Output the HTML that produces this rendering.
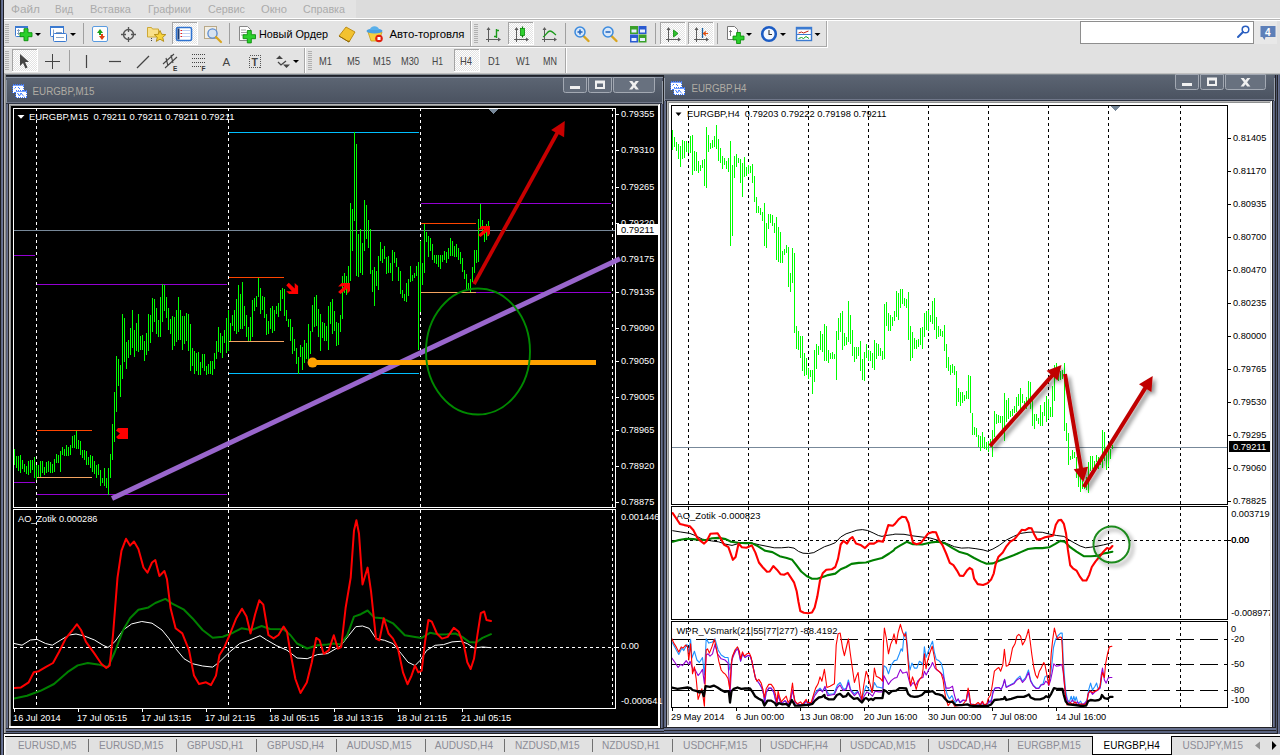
<!DOCTYPE html>
<html lang="ru"><head><meta charset="utf-8"><title>MetaTrader 4 - EURGBP</title>
<style>
html,body{margin:0;padding:0;background:#dcdcdc;}
body{width:1280px;height:755px;position:relative;overflow:hidden;font-family:"Liberation Sans",sans-serif;}
svg{display:block}
svg text{font-family:"Liberation Sans",sans-serif;}
</style></head><body>
<svg id="frame" width="1280" height="755" viewBox="0 0 1280 755" font-family="Liberation Sans, sans-serif" style="position:absolute;left:0;top:0"><defs><linearGradient id="tg" x1="0" y1="0" x2="0" y2="1"><stop offset="0" stop-color="#5c6573"/><stop offset="1" stop-color="#4b5361"/></linearGradient></defs>
<g shape-rendering="crispEdges">
<rect x="0" y="0" width="1280" height="21" fill="#dcdcdc" />
<rect x="0" y="21" width="1280" height="54" fill="#e1e1e1" />
<rect x="4" y="0" width="352" height="18" fill="#e3e3e3" />
<rect x="4" y="18" width="1276" height="1" fill="#ffffff" />
<rect x="4" y="19" width="1276" height="1" fill="#b4b4b4" />
<rect x="4" y="20" width="1276" height="1" fill="#ffffff" />
<rect x="4" y="21" width="823" height="26" fill="#e3e3e3" />
<rect x="4" y="46" width="823" height="1" fill="#a8a8a8" />
<rect x="4" y="47" width="824" height="1" fill="#ffffff" />
<rect x="826" y="21" width="1" height="26" fill="#a8a8a8" />
<rect x="827" y="21" width="1" height="27" fill="#ffffff" />
<rect x="470" y="21" width="1" height="25" fill="#a8a8a8" />
<rect x="471" y="21" width="1" height="25" fill="#ffffff" />
<rect x="4" y="48" width="562" height="25" fill="#e3e3e3" />
<rect x="565" y="48" width="1" height="25" fill="#a8a8a8" />
<rect x="566" y="48" width="1" height="25" fill="#ffffff" />
<rect x="304" y="48" width="1" height="25" fill="#a8a8a8" />
<rect x="305" y="48" width="1" height="25" fill="#ffffff" />
<rect x="4" y="73" width="1276" height="1" fill="#c0c0c0" />
<rect x="4" y="74" width="1276" height="1" fill="#80888f" />
<rect x="4" y="75" width="1276" height="659" fill="#5a6480" />
<rect x="0" y="0" width="1" height="755" fill="#1c1c1c" />
<rect x="1" y="0" width="1" height="755" fill="#5c6788" />
<rect x="2" y="0" width="1" height="755" fill="#6b7596" />
<rect x="3" y="0" width="1" height="755" fill="#202024" />
<rect x="4" y="73" width="1" height="663" fill="#b6b6b6" />
<rect x="5" y="74" width="1" height="662" fill="#8c8e8e" />
<rect x="1276" y="75" width="1" height="659" fill="#505870" />
<rect x="1277" y="75" width="1" height="661" fill="#222226" />
<rect x="1278" y="75" width="1" height="661" fill="#67718f" />
<rect x="1279" y="75" width="1" height="661" fill="#535b78" />
<rect x="6" y="75" width="658" height="657" fill="#67718f" />
<rect x="6" y="75" width="658" height="1" fill="#1e2028" />
<rect x="6" y="76" width="658" height="1" fill="#2a303a" />
<rect x="6" y="77" width="658" height="1" fill="#8a93a2" />
<rect x="6" y="78" width="657" height="24" fill="url(#tg)" />
<rect x="6" y="102" width="658" height="1" fill="#6f7688" />
<rect x="6" y="103" width="658" height="1" fill="#2e3442" />
<rect x="6" y="104" width="1" height="628" fill="#565d76" />
<rect x="7" y="104" width="1" height="628" fill="#68728f" />
<rect x="8" y="104" width="1" height="628" fill="#222226" />
<rect x="660" y="104" width="1" height="628" fill="#222226" />
<rect x="661" y="104" width="1" height="628" fill="#67718f" />
<rect x="662" y="78" width="1" height="654" fill="#4a5068" />
<rect x="663" y="75" width="1" height="657" fill="#222226" />
<rect x="6" y="728" width="658" height="1" fill="#222226" />
<rect x="6" y="729" width="658" height="1" fill="#67718f" />
<rect x="6" y="730" width="658" height="1" fill="#67718f" />
<rect x="6" y="731" width="658" height="1" fill="#222226" />
<rect x="9" y="104" width="651" height="1" fill="#b8b8b8" />
<rect x="9" y="105" width="651" height="1" fill="#8e9090" />
<rect x="9" y="104" width="1" height="624" fill="#b8b8b8" />
<rect x="10" y="105" width="1" height="623" fill="#8e9090" />
<rect x="658" y="105" width="1" height="623" fill="#ffffff" />
<rect x="659" y="104" width="1" height="624" fill="#ffffff" />
<rect x="9" y="726" width="651" height="1" fill="#ffffff" />
<rect x="9" y="727" width="651" height="1" fill="#ffffff" />
<rect x="664" y="75" width="612" height="656" fill="#67718f" />
<rect x="664" y="75" width="612" height="24" fill="url(#tg)" />
<rect x="664" y="99" width="612" height="1" fill="#6f7688" />
<rect x="664" y="100" width="612" height="1" fill="#2e3442" />
<rect x="664" y="101" width="1" height="630" fill="#5a6480" />
<rect x="665" y="101" width="1" height="630" fill="#67718f" />
<rect x="666" y="101" width="1" height="630" fill="#222226" />
<rect x="1272" y="101" width="1" height="630" fill="#222226" />
<rect x="1273" y="101" width="1" height="630" fill="#67718f" />
<rect x="1274" y="75" width="1" height="656" fill="#565d76" />
<rect x="1275" y="75" width="1" height="656" fill="#222226" />
<rect x="664" y="727" width="612" height="1" fill="#222226" />
<rect x="664" y="728" width="612" height="1" fill="#67718f" />
<rect x="664" y="729" width="612" height="1" fill="#67718f" />
<rect x="664" y="730" width="612" height="1" fill="#222226" />
<rect x="667" y="101" width="605" height="1" fill="#b8b8b8" />
<rect x="667" y="102" width="605" height="1" fill="#8e9090" />
<rect x="667" y="101" width="1" height="626" fill="#b8b8b8" />
<rect x="668" y="102" width="1" height="625" fill="#8e9090" />
<rect x="1270" y="102" width="1" height="625" fill="#e4e4e4" />
<rect x="1271" y="101" width="1" height="626" fill="#ffffff" />
<rect x="667" y="725" width="605" height="1" fill="#e4e4e4" />
<rect x="667" y="726" width="605" height="1" fill="#ffffff" />
<rect x="6" y="80" width="1" height="23" fill="#8790a0" />
<rect x="662" y="81" width="1" height="23" fill="#98a0ac" />
<rect x="664" y="78" width="1" height="23" fill="#98a0ac" />
<rect x="1274" y="78" width="1" height="23" fill="#98a0ac" />
<rect x="4" y="733" width="1273" height="1" fill="#222226" />
<rect x="4" y="734" width="1276" height="1" fill="#ffffff" />
<rect x="4" y="735" width="1276" height="1" fill="#ffffff" />
<rect x="4" y="736" width="1276" height="1" fill="#000000" />
<rect x="4" y="737" width="1276" height="18" fill="#e1e1e1" />
<rect x="4" y="734" width="1" height="21" fill="#ffffff" />
<rect x="5" y="737" width="1" height="18" fill="#f4f4f4" />
<rect x="1092" y="736" width="80" height="19" fill="#000" />
<rect x="1093" y="734" width="78" height="20" fill="#fff" />
</g>
<defs><pattern id="chk" width="2" height="2" patternUnits="userSpaceOnUse"><rect width="2" height="2" fill="#e2e2e2"/><rect width="1" height="1" fill="#fff"/><rect x="1" y="1" width="1" height="1" fill="#fff"/></pattern></defs>
<rect x="5" y="24" width="4" height="1" fill="#b0b0b0" shape-rendering="crispEdges"/>
<rect x="5" y="26" width="4" height="1" fill="#b0b0b0" shape-rendering="crispEdges"/>
<rect x="5" y="28" width="4" height="1" fill="#b0b0b0" shape-rendering="crispEdges"/>
<rect x="5" y="30" width="4" height="1" fill="#b0b0b0" shape-rendering="crispEdges"/>
<rect x="5" y="32" width="4" height="1" fill="#b0b0b0" shape-rendering="crispEdges"/>
<rect x="5" y="34" width="4" height="1" fill="#b0b0b0" shape-rendering="crispEdges"/>
<rect x="5" y="36" width="4" height="1" fill="#b0b0b0" shape-rendering="crispEdges"/>
<rect x="5" y="38" width="4" height="1" fill="#b0b0b0" shape-rendering="crispEdges"/>
<rect x="5" y="40" width="4" height="1" fill="#b0b0b0" shape-rendering="crispEdges"/>
<rect x="5" y="42" width="4" height="1" fill="#b0b0b0" shape-rendering="crispEdges"/>
<rect x="5" y="51" width="4" height="1" fill="#b0b0b0" shape-rendering="crispEdges"/>
<rect x="5" y="53" width="4" height="1" fill="#b0b0b0" shape-rendering="crispEdges"/>
<rect x="5" y="55" width="4" height="1" fill="#b0b0b0" shape-rendering="crispEdges"/>
<rect x="5" y="57" width="4" height="1" fill="#b0b0b0" shape-rendering="crispEdges"/>
<rect x="5" y="59" width="4" height="1" fill="#b0b0b0" shape-rendering="crispEdges"/>
<rect x="5" y="61" width="4" height="1" fill="#b0b0b0" shape-rendering="crispEdges"/>
<rect x="5" y="63" width="4" height="1" fill="#b0b0b0" shape-rendering="crispEdges"/>
<rect x="5" y="65" width="4" height="1" fill="#b0b0b0" shape-rendering="crispEdges"/>
<rect x="5" y="67" width="4" height="1" fill="#b0b0b0" shape-rendering="crispEdges"/>
<rect x="5" y="69" width="4" height="1" fill="#b0b0b0" shape-rendering="crispEdges"/>
<rect x="474" y="24" width="4" height="1" fill="#b0b0b0" shape-rendering="crispEdges"/>
<rect x="474" y="26" width="4" height="1" fill="#b0b0b0" shape-rendering="crispEdges"/>
<rect x="474" y="28" width="4" height="1" fill="#b0b0b0" shape-rendering="crispEdges"/>
<rect x="474" y="30" width="4" height="1" fill="#b0b0b0" shape-rendering="crispEdges"/>
<rect x="474" y="32" width="4" height="1" fill="#b0b0b0" shape-rendering="crispEdges"/>
<rect x="474" y="34" width="4" height="1" fill="#b0b0b0" shape-rendering="crispEdges"/>
<rect x="474" y="36" width="4" height="1" fill="#b0b0b0" shape-rendering="crispEdges"/>
<rect x="474" y="38" width="4" height="1" fill="#b0b0b0" shape-rendering="crispEdges"/>
<rect x="474" y="40" width="4" height="1" fill="#b0b0b0" shape-rendering="crispEdges"/>
<rect x="474" y="42" width="4" height="1" fill="#b0b0b0" shape-rendering="crispEdges"/>
<rect x="308" y="51" width="4" height="1" fill="#b0b0b0" shape-rendering="crispEdges"/>
<rect x="308" y="53" width="4" height="1" fill="#b0b0b0" shape-rendering="crispEdges"/>
<rect x="308" y="55" width="4" height="1" fill="#b0b0b0" shape-rendering="crispEdges"/>
<rect x="308" y="57" width="4" height="1" fill="#b0b0b0" shape-rendering="crispEdges"/>
<rect x="308" y="59" width="4" height="1" fill="#b0b0b0" shape-rendering="crispEdges"/>
<rect x="308" y="61" width="4" height="1" fill="#b0b0b0" shape-rendering="crispEdges"/>
<rect x="308" y="63" width="4" height="1" fill="#b0b0b0" shape-rendering="crispEdges"/>
<rect x="308" y="65" width="4" height="1" fill="#b0b0b0" shape-rendering="crispEdges"/>
<rect x="308" y="67" width="4" height="1" fill="#b0b0b0" shape-rendering="crispEdges"/>
<rect x="308" y="69" width="4" height="1" fill="#b0b0b0" shape-rendering="crispEdges"/>
<rect x="15.5" y="26.5" width="12" height="10" rx="1" fill="#fff" stroke="#3b7ad0"/><rect x="15" y="26" width="13" height="2" fill="#3b7ad0"/><path d="M18.5,29.500v5M17,31l1.500,-1.500l1.500,1.500M17,33l1.500,1.500l1.500,-1.500" stroke="#6a8ab0" fill="none" stroke-width="0.8"/>
<path d="M24,28.700000000000003h4v4h4v4h-4v4h-4v-4h-4v-4h4z" fill="#2bd02b" stroke="#0b8f0b" stroke-width="0.9"/>
<polygon points="35,33 41,33 38,36" fill="#000"/>
<rect x="50.5" y="26.5" width="13" height="10" rx="1" fill="#fff" stroke="#3b7ad0"/><rect x="50" y="26" width="14" height="2" fill="#3b7ad0"/><path d="M53.500,29.500v5M56,32.500h6" stroke="#7a9ac0" stroke-width="0.9"/><rect x="53.5" y="33.5" width="13" height="8" rx="1" fill="#fff" stroke="#3b7ad0"/><path d="M56,37.500h8" stroke="#7a9ac0" stroke-width="0.9"/>
<polygon points="70,33 76,33 73,36" fill="#000"/>
<rect x="83" y="23" width="1" height="21" fill="#a0a0a0" shape-rendering="crispEdges"/>
<rect x="92.5" y="26.5" width="15" height="15" rx="1.5" fill="#fdfdfd" stroke="#5a9be0"/><path d="M97,33l3,-4l3,4h-2v2h-2v-2z" fill="#1aa01a"/><path d="M99,35l3,4l3,-4h-2v-2h-2v2z" fill="#e04010" transform="translate(0,1)"/>
<circle cx="128.5" cy="34.5" r="5" fill="none" stroke="#555" stroke-width="1.4"/><path d="M128.5,27v5M128.5,37v5M121,34.5h5M131,34.5h5" stroke="#555" stroke-width="1.3"/>
<path d="M147.500,27.500h4l1,1.500h6v8h-11z" fill="#f8e08a" stroke="#c9a227" stroke-width="0.9"/><polygon points="160,30.500 161.700,34.300 165.800,34.600 162.700,37.300 163.700,41.400 160,39.200 156.300,41.400 157.300,37.300 154.200,34.600 158.300,34.300" fill="#f7d33a" stroke="#b08a14" stroke-width="0.9"/><path d="M151.5,38v4" stroke="#444" stroke-dasharray="1 1"/>
<g shape-rendering="crispEdges"><rect x="172" y="22" width="26" height="23" fill="url(#chk)"/><rect x="172" y="22" width="26" height="1" fill="#a4a4a4"/><rect x="172" y="22" width="1" height="23" fill="#a4a4a4"/><rect x="172" y="44" width="26" height="1" fill="#fff"/><rect x="197" y="22" width="1" height="23" fill="#fff"/></g>
<rect x="176.5" y="27.5" width="15" height="13" rx="1.5" fill="#fff" stroke="#2f73d0" stroke-width="1.6"/><rect x="177.500" y="28.500" width="2" height="11" fill="#1a3a70"/><path d="M181,30.500h9M181,33.500h9M181,36.500h9" stroke="#b0c4ee" stroke-width="0.8"/><path d="M180.500,30.500h1.500M180.500,33.500h1.500M180.500,36.500h1.500" stroke="#e02020"/>
<rect x="204.5" y="26.5" width="12" height="12" fill="#f2efe6" stroke="#b8a888"/><circle cx="212.5" cy="33.5" r="4.6" fill="#cfe0f5" fill-opacity="0.8" stroke="#5a8ad0" stroke-width="1.3"/><path d="M216,37l5,5" stroke="#d9a520" stroke-width="2.2" stroke-linecap="round"/>
<rect x="229" y="23" width="1" height="21" fill="#a0a0a0" shape-rendering="crispEdges"/>
<path d="M239.5,26.5h8l3,3v11h-11z" fill="#fff" stroke="#888"/><path d="M241,30h5M241,32.5h7M241,35h4" stroke="#888" stroke-width="0.8"/>
<path d="M247.3,30.500000000000004h4v4.2h4.2v4h-4.2v4.2h-4v-4.2h-4.2v-4h4.2z" fill="#2bd02b" stroke="#0b8f0b" stroke-width="0.9"/>
<path d="M339,36l7,-9l9,5l-6,10z" fill="#f2c230" stroke="#b8860b" stroke-width="0.9"/><path d="M339,36l10,6l0,-1.5" fill="none" stroke="#8a6508" stroke-width="1"/>
<path d="M368,32h14l-3,9h-8z" fill="#f5d040" stroke="#c9a020" stroke-width="0.8"/><ellipse cx="374.5" cy="31" rx="8" ry="2.6" fill="#4aa0e0"/><path d="M370,30c0,-5 9,-5 9,0z" fill="#5ab0ea"/><circle cx="379" cy="38.5" r="3.8" fill="#e02010"/><rect x="377.5" y="37" width="3" height="3" fill="#fff"/>
<path d="M488.5,28v14M486,39.5h14" stroke="#5c5c5c" stroke-width="1" fill="none"/><path d="M488.5,27l-2,3h4zM501,39.5l-3,-2v4z" fill="#5c5c5c"/>
<path d="M496.5,29v9M496.5,30.5h2.5M494,36.5h2.5" stroke="#1a9a1a" stroke-width="1.4" fill="none"/>
<g shape-rendering="crispEdges"><rect x="508" y="22" width="26" height="23" fill="url(#chk)"/><rect x="508" y="22" width="26" height="1" fill="#a4a4a4"/><rect x="508" y="22" width="1" height="23" fill="#a4a4a4"/><rect x="508" y="44" width="26" height="1" fill="#fff"/><rect x="533" y="22" width="1" height="23" fill="#fff"/></g>
<path d="M516.5,28v14M514,39.5h14" stroke="#5c5c5c" stroke-width="1" fill="none"/><path d="M516.5,27l-2,3h4zM529,39.5l-3,-2v4z" fill="#5c5c5c"/>
<path d="M522.5,26.5v11" stroke="#0a7a0a" stroke-width="1.2"/><rect x="520.5" y="28.5" width="4" height="7" fill="#2fd02f" stroke="#0a8a0a" stroke-width="0.8"/>
<path d="M544.5,28v14M542,39.5h14" stroke="#5c5c5c" stroke-width="1" fill="none"/><path d="M544.5,27l-2,3h4zM557,39.5l-3,-2v4z" fill="#5c5c5c"/>
<path d="M543,37c3,-1 4,-6 7,-6c2.500,0 3,2 6,4" stroke="#1a9a1a" stroke-width="1.3" fill="none"/>
<rect x="565" y="23" width="1" height="21" fill="#a0a0a0" shape-rendering="crispEdges"/>
<path d="M583,35.5l5.500,5.500" stroke="#d9a520" stroke-width="2.4" stroke-linecap="round"/><circle cx="580" cy="32" r="5" fill="#d8e8fa" stroke="#3b8ade" stroke-width="1.5"/><path d="M577.5,32h5" stroke="#2a6ac0" stroke-width="1.6"/>
<path d="M580,29.5v5" stroke="#2a6ac0" stroke-width="1.6"/>
<path d="M611,35.5l5.500,5.500" stroke="#d9a520" stroke-width="2.4" stroke-linecap="round"/><circle cx="608" cy="32" r="5" fill="#d8e8fa" stroke="#3b8ade" stroke-width="1.5"/><path d="M605.5,32h5" stroke="#2a6ac0" stroke-width="1.6"/>
<rect x="630" y="26" width="8" height="8" fill="#3aa02a"/><rect x="631.5" y="29.5" width="5" height="3" fill="#e8f0ff"/>
<rect x="638.5" y="26" width="8" height="8" fill="#2a5ad0"/><rect x="640.0" y="29.5" width="5" height="3" fill="#e8f0ff"/>
<rect x="630" y="34.5" width="8" height="8" fill="#2a5ad0"/><rect x="631.5" y="38.0" width="5" height="3" fill="#e8f0ff"/>
<rect x="638.5" y="34.5" width="8" height="8" fill="#3aa02a"/><rect x="640.0" y="38.0" width="5" height="3" fill="#e8f0ff"/>
<rect x="655" y="23" width="1" height="21" fill="#a0a0a0" shape-rendering="crispEdges"/>
<g shape-rendering="crispEdges"><rect x="660" y="22" width="26" height="23" fill="url(#chk)"/><rect x="660" y="22" width="26" height="1" fill="#a4a4a4"/><rect x="660" y="22" width="1" height="23" fill="#a4a4a4"/><rect x="660" y="44" width="26" height="1" fill="#fff"/><rect x="685" y="22" width="1" height="23" fill="#fff"/></g>
<path d="M668.5,28v14M666,39.5h14" stroke="#5c5c5c" stroke-width="1" fill="none"/><path d="M668.5,27l-2,3h4zM681,39.5l-3,-2v4z" fill="#5c5c5c"/>
<polygon points="673.500,30 673.500,37 678,33.500" fill="#2ec02e" stroke="#0a8a0a" stroke-width="0.8"/>
<g shape-rendering="crispEdges"><rect x="688" y="22" width="26" height="23" fill="url(#chk)"/><rect x="688" y="22" width="26" height="1" fill="#a4a4a4"/><rect x="688" y="22" width="1" height="23" fill="#a4a4a4"/><rect x="688" y="44" width="26" height="1" fill="#fff"/><rect x="713" y="22" width="1" height="23" fill="#fff"/></g>
<path d="M696.5,28v14M694,39.5h14" stroke="#5c5c5c" stroke-width="1" fill="none"/><path d="M696.5,27l-2,3h4zM709,39.5l-3,-2v4z" fill="#5c5c5c"/>
<path d="M702.500,28v10" stroke="#1a60a0" stroke-width="1.3"/><path d="M708,33.500h-4M706,31.500l-2.500,2l2.500,2" stroke="#e05010" stroke-width="1.2" fill="none"/>
<rect x="717" y="23" width="1" height="21" fill="#a0a0a0" shape-rendering="crispEdges"/>
<path d="M727.500,26.500h7l3,3v10h-10z" fill="#fff" stroke="#777"/><path d="M730.500,30v6M729,31.500h3" stroke="#777" stroke-width="0.9"/>
<path d="M736.6,32.5h3.8v3.6h3.6v3.8h-3.6v3.6h-3.8v-3.6h-3.6v-3.8h3.6z" fill="#2bd02b" stroke="#0b8f0b" stroke-width="0.9"/>
<polygon points="746,33 752,33 749,36" fill="#000"/>
<circle cx="769" cy="34" r="6.800" fill="#f4f8ff" stroke="#1c5cc4" stroke-width="2.600"/><path d="M769,30v4.500h3" stroke="#333" stroke-width="1.1" fill="none"/>
<polygon points="780,33 786,33 783,36" fill="#000"/>
<rect x="796.500" y="27.500" width="15" height="13" fill="#fff" stroke="#3b7ad0" stroke-width="1.4"/><rect x="796" y="27" width="16" height="2.500" fill="#3b7ad0"/><path d="M797,34.500h14" stroke="#3b7ad0"/><path d="M798.500,33l3,-1l2,1l5,-2" stroke="#c02010" fill="none"/><path d="M798.500,38.500l3,-1l2,1l2.500,-2l3,2" stroke="#10a020" fill="none"/>
<polygon points="814.5,33 820.5,33 817.5,36" fill="#000"/>
<rect x="1080.500" y="21.500" width="173" height="22" fill="#fff" stroke="#8e8e8e" shape-rendering="crispEdges"/>
<circle cx="1245.500" cy="29.500" r="3.300" fill="none" stroke="#2a5fc0" stroke-width="1.500"/><path d="M1243,32l-5,5" stroke="#2a5fc0" stroke-width="2" stroke-linecap="round"/>
<rect x="1254" y="21" width="23" height="23" fill="#e8e8e8"/><path d="M1260.500,26h15v11h-10l-1,3l-2,-3h-2z" fill="#5d7fb8"/><text x="1265" y="35.500" font-size="10" font-weight="bold" fill="#fff">4</text>
<g shape-rendering="crispEdges"><rect x="12" y="49" width="26" height="23" fill="url(#chk)"/><rect x="12" y="49" width="26" height="1" fill="#a4a4a4"/><rect x="12" y="49" width="1" height="23" fill="#a4a4a4"/><rect x="12" y="71" width="26" height="1" fill="#fff"/><rect x="37" y="49" width="1" height="23" fill="#fff"/></g>
<path d="M20,54v12l3,-3l2.500,5.500l2,-1l-2.500,-5.500h4z" fill="#444"/>
<path d="M52.500,54v15M45,61.500h15" stroke="#444" stroke-width="1"/>
<rect x="69" y="50" width="1" height="21" fill="#a0a0a0" shape-rendering="crispEdges"/>
<path d="M86.500,55v13" stroke="#444" stroke-width="1.2"/><path d="M109,61.500h12" stroke="#444" stroke-width="1.2"/><path d="M137,68l12,-12" stroke="#444" stroke-width="1.2"/>
<path d="M163,64l11,-10M165,68l12,-11M166,58l2,8M171,55l2,8" stroke="#444" stroke-width="1.1"/><text x="173" y="70.500" font-size="6.500" font-weight="bold" fill="#333">E</text>
<path d="M192,54.500h13M192,58.500h13M192,62.500h13M192,66.500h9" stroke="#444" stroke-width="1" stroke-dasharray="1 1"/><text x="201.500" y="70.500" font-size="6.500" font-weight="bold" fill="#333">F</text>
<text x="222.500" y="66" font-size="11.500" fill="#444">A</text>
<rect x="249.500" y="55.500" width="11" height="12" fill="none" stroke="#555" stroke-dasharray="1 1" shape-rendering="crispEdges"/><text x="251.500" y="66" font-size="10.500" font-weight="bold" fill="#444">T</text>
<path d="M276,59l3.500,-3.500l3.500,3.500zM283,64.500l3.500,3.500l3.500,-3.500z" fill="#444"/><path d="M278,62l3,3l5,-4" stroke="#444" stroke-width="1.300" fill="none"/>
<polygon points="293,60 299,60 296,63" fill="#000"/>
<g shape-rendering="crispEdges"><rect x="454" y="49" width="26" height="23" fill="url(#chk)"/><rect x="454" y="49" width="26" height="1" fill="#a4a4a4"/><rect x="454" y="49" width="1" height="23" fill="#a4a4a4"/><rect x="454" y="71" width="26" height="1" fill="#fff"/><rect x="479" y="49" width="1" height="23" fill="#fff"/></g>
<g shape-rendering="crispEdges"><rect x="12.5" y="84.5" width="11" height="8" fill="#fff" stroke="#3a78ff" stroke-width="1" stroke-dasharray="1 1"/><rect x="12.5" y="85.0" width="11" height="1" fill="#3a78ff" opacity="0.7"/><rect x="15.5" y="90.5" width="11" height="7" fill="#fff" stroke="#3a78ff" stroke-width="1" stroke-dasharray="1 1"/><rect x="15.5" y="91.0" width="11" height="1" fill="#3a78ff" opacity="0.7"/></g><path d="M14.5,88.5l1.500,-1.500M18.0,87.0l2,2" stroke="#3a78ff" fill="none" stroke-width="1"/><path d="M17.5,93.0l2,3l1.500,-3l2,2.500l1,1" stroke="#3a78ff" fill="none" stroke-width="1"/>
<g shape-rendering="crispEdges"><rect x="670.5" y="81.5" width="11" height="8" fill="#fff" stroke="#3a78ff" stroke-width="1" stroke-dasharray="1 1"/><rect x="670.5" y="82.0" width="11" height="1" fill="#3a78ff" opacity="0.7"/><rect x="673.5" y="87.5" width="11" height="7" fill="#fff" stroke="#3a78ff" stroke-width="1" stroke-dasharray="1 1"/><rect x="673.5" y="88.0" width="11" height="1" fill="#3a78ff" opacity="0.7"/></g><path d="M672.5,85.5l1.500,-1.500M676.0,84.0l2,2" stroke="#3a78ff" fill="none" stroke-width="1"/><path d="M675.5,90.0l2,3l1.500,-3l2,2.500l1,1" stroke="#3a78ff" fill="none" stroke-width="1"/>
<path d="M563.5,77.5h23v13q0,2 -2,2h-19q-2,0 -2,-2z" fill="#636c7a" stroke="#a3a9b3" stroke-width="1"/>
<path d="M588.5,77.5h23v13q0,2 -2,2h-19q-2,0 -2,-2z" fill="#636c7a" stroke="#a3a9b3" stroke-width="1"/>
<path d="M613.5,77.5h41v13q0,2 -2,2h-37q-2,0 -2,-2z" fill="#68717f" stroke="#a3a9b3" stroke-width="1"/>
<rect x="570.0" y="86" width="10" height="3" fill="#f0f0f0"/>
<path d="M595.0,80.5h10v8.5h-10zM597.0,83.5v3.5h6v-3.5z" fill="#f0f0f0" fill-rule="evenodd"/>
<path d="M629.1,81.0h3.2l6.600,8.400h-3.200z" fill="#f0f0f0"/><path d="M638.9,81.0h-3.2l-6.600,8.400h3.200z" fill="#f0f0f0"/>
<path d="M1175.5,74.5h23v13q0,2 -2,2h-19q-2,0 -2,-2z" fill="#636c7a" stroke="#a3a9b3" stroke-width="1"/>
<path d="M1200.5,74.5h23v13q0,2 -2,2h-19q-2,0 -2,-2z" fill="#636c7a" stroke="#a3a9b3" stroke-width="1"/>
<path d="M1225.5,74.5h40v13q0,2 -2,2h-36q-2,0 -2,-2z" fill="#68717f" stroke="#a3a9b3" stroke-width="1"/>
<rect x="1182.0" y="83" width="10" height="3" fill="#f0f0f0"/>
<path d="M1207.0,77.5h10v8.5h-10zM1209.0,80.5v3.5h6v-3.5z" fill="#f0f0f0" fill-rule="evenodd"/>
<path d="M1240.6,78.0h3.2l6.600,8.400h-3.200z" fill="#f0f0f0"/><path d="M1250.4,78.0h-3.2l-6.600,8.400h3.200z" fill="#f0f0f0"/>
<text x="32.5" y="95" font-size="11" fill="#b0aca4" textLength="62" lengthAdjust="spacingAndGlyphs">EURGBP,M15</text>
<text x="691.5" y="92" font-size="11" fill="#b0aca4" textLength="55" lengthAdjust="spacingAndGlyphs">EURGBP,H4</text>
<text x="11" y="13" font-size="11.3" fill="#ababab" textLength="29" lengthAdjust="spacingAndGlyphs">Файл</text>
<text x="55" y="13" font-size="11.3" fill="#ababab" textLength="18" lengthAdjust="spacingAndGlyphs">Вид</text>
<text x="90" y="13" font-size="11.3" fill="#ababab" textLength="41" lengthAdjust="spacingAndGlyphs">Вставка</text>
<text x="148" y="13" font-size="11.3" fill="#ababab" textLength="43" lengthAdjust="spacingAndGlyphs">Графики</text>
<text x="208" y="13" font-size="11.3" fill="#ababab" textLength="37" lengthAdjust="spacingAndGlyphs">Сервис</text>
<text x="261" y="13" font-size="11.3" fill="#ababab" textLength="26" lengthAdjust="spacingAndGlyphs">Окно</text>
<text x="303" y="13" font-size="11.3" fill="#ababab" textLength="42" lengthAdjust="spacingAndGlyphs">Справка</text>
<text x="259" y="38" font-size="11" fill="#000" textLength="69" lengthAdjust="spacingAndGlyphs">Новый Ордер</text>
<text x="389.5" y="38" font-size="11" fill="#000" textLength="75" lengthAdjust="spacingAndGlyphs">Авто-торговля</text>
<text x="319" y="64.5" font-size="10.4" fill="#454545" textLength="13" lengthAdjust="spacingAndGlyphs">M1</text>
<text x="347" y="64.5" font-size="10.4" fill="#454545" textLength="13" lengthAdjust="spacingAndGlyphs">M5</text>
<text x="373" y="64.5" font-size="10.4" fill="#454545" textLength="18" lengthAdjust="spacingAndGlyphs">M15</text>
<text x="401" y="64.5" font-size="10.4" fill="#454545" textLength="18" lengthAdjust="spacingAndGlyphs">M30</text>
<text x="432" y="64.5" font-size="10.4" fill="#454545" textLength="11" lengthAdjust="spacingAndGlyphs">H1</text>
<text x="460" y="64.5" font-size="10.4" fill="#454545" textLength="12" lengthAdjust="spacingAndGlyphs">H4</text>
<text x="488" y="64.5" font-size="10.4" fill="#454545" textLength="12" lengthAdjust="spacingAndGlyphs">D1</text>
<text x="516" y="64.5" font-size="10.4" fill="#454545" textLength="14" lengthAdjust="spacingAndGlyphs">W1</text>
<text x="543" y="64.5" font-size="10.4" fill="#454545" textLength="14" lengthAdjust="spacingAndGlyphs">MN</text>
<text x="18" y="749" font-size="10.6" fill="#8c8c96" textLength="58.5" lengthAdjust="spacingAndGlyphs">EURUSD,M5</text>
<text x="99" y="749" font-size="10.6" fill="#8c8c96" textLength="64.5" lengthAdjust="spacingAndGlyphs">EURUSD,M15</text>
<text x="187" y="749" font-size="10.6" fill="#8c8c96" textLength="56.5" lengthAdjust="spacingAndGlyphs">GBPUSD,H1</text>
<text x="267" y="749" font-size="10.6" fill="#8c8c96" textLength="57.0" lengthAdjust="spacingAndGlyphs">GBPUSD,H4</text>
<text x="346.7" y="749" font-size="10.6" fill="#8c8c96" textLength="64.8" lengthAdjust="spacingAndGlyphs">AUDUSD,M15</text>
<text x="434.8" y="749" font-size="10.6" fill="#8c8c96" textLength="58.2" lengthAdjust="spacingAndGlyphs">AUDUSD,H4</text>
<text x="515" y="749" font-size="10.6" fill="#8c8c96" textLength="64.6" lengthAdjust="spacingAndGlyphs">NZDUSD,M15</text>
<text x="602" y="749" font-size="10.6" fill="#8c8c96" textLength="57.8" lengthAdjust="spacingAndGlyphs">NZDUSD,H1</text>
<text x="683" y="749" font-size="10.6" fill="#8c8c96" textLength="64.5" lengthAdjust="spacingAndGlyphs">USDCHF,M15</text>
<text x="770" y="749" font-size="10.6" fill="#8c8c96" textLength="58.0" lengthAdjust="spacingAndGlyphs">USDCHF,H4</text>
<text x="850" y="749" font-size="10.6" fill="#8c8c96" textLength="65.8" lengthAdjust="spacingAndGlyphs">USDCAD,M15</text>
<text x="938" y="749" font-size="10.6" fill="#8c8c96" textLength="58.8" lengthAdjust="spacingAndGlyphs">USDCAD,H4</text>
<text x="1017.3" y="749" font-size="10.6" fill="#8c8c96" textLength="63.5" lengthAdjust="spacingAndGlyphs">EURGBP,M15</text>
<text x="1103.6" y="749" font-size="10.6" fill="#000" textLength="56.1" lengthAdjust="spacingAndGlyphs">EURGBP,H4</text>
<text x="1182.5" y="749" font-size="10.6" fill="#8c8c96" textLength="60.5" lengthAdjust="spacingAndGlyphs">USDJPY,M15</text>
<g shape-rendering="crispEdges">
<rect x="88" y="739" width="1" height="13" fill="#707070" />
<rect x="176" y="739" width="1" height="13" fill="#707070" />
<rect x="256" y="739" width="1" height="13" fill="#707070" />
<rect x="336" y="739" width="1" height="13" fill="#707070" />
<rect x="425" y="739" width="1" height="13" fill="#707070" />
<rect x="504" y="739" width="1" height="13" fill="#707070" />
<rect x="592" y="739" width="1" height="13" fill="#707070" />
<rect x="672" y="739" width="1" height="13" fill="#707070" />
<rect x="760" y="739" width="1" height="13" fill="#707070" />
<rect x="840" y="739" width="1" height="13" fill="#707070" />
<rect x="928" y="739" width="1" height="13" fill="#707070" />
<rect x="1008" y="739" width="1" height="13" fill="#707070" />
</g>
<polygon points="1255,745.5 1260,741.5 1260,749.5" fill="#909090"/><polygon points="1276.500,745.5 1272,741 1272,750" fill="#000"/></svg>
<svg id="charts" width="1280" height="755" viewBox="0 0 1280 755" font-family="Liberation Sans, sans-serif" style="position:absolute;left:0;top:0"><g shape-rendering="crispEdges">
<rect x="11" y="106" width="647" height="620" fill="#000" />
<rect x="13" y="108" width="603" height="1" fill="#fff" />
<rect x="13" y="507" width="603" height="1" fill="#fff" />
<rect x="13" y="108" width="1" height="400" fill="#fff" />
<rect x="615" y="108" width="1" height="400" fill="#fff" />
<rect x="13" y="509" width="603" height="1" fill="#fff" />
<rect x="13" y="708" width="603" height="1" fill="#fff" />
<rect x="13" y="509" width="1" height="200" fill="#fff" />
<rect x="615" y="509" width="1" height="200" fill="#fff" />
<line x1="36.5" y1="109" x2="36.5" y2="708" stroke="#fff" stroke-width="1" stroke-dasharray="3 3" stroke-dashoffset="1"/>
<line x1="228.5" y1="109" x2="228.5" y2="708" stroke="#fff" stroke-width="1" stroke-dasharray="3 3" stroke-dashoffset="1"/>
<line x1="420.5" y1="109" x2="420.5" y2="708" stroke="#fff" stroke-width="1" stroke-dasharray="3 3" stroke-dashoffset="1"/>
<line x1="612.5" y1="109" x2="612.5" y2="708" stroke="#fff" stroke-width="1" stroke-dasharray="3 3" stroke-dashoffset="1"/>
<rect x="14" y="230" width="601" height="1" fill="#778899" />
<rect x="14" y="255" width="21" height="1" fill="#9400d3" />
<rect x="37" y="284" width="190" height="1" fill="#9400d3" />
<rect x="14" y="482" width="21" height="1" fill="#9400d3" />
<rect x="37" y="494" width="190" height="1" fill="#9400d3" />
<rect x="421" y="203" width="190" height="1" fill="#9400d3" />
<rect x="476" y="292" width="135" height="1" fill="#9400d3" />
<rect x="37" y="430" width="55" height="1" fill="#ff4500" />
<rect x="229" y="277" width="55" height="1" fill="#ff4500" />
<rect x="421" y="223" width="55" height="1" fill="#ff4500" />
<rect x="37" y="477" width="55" height="1" fill="#f4a460" />
<rect x="229" y="341" width="55" height="1" fill="#f4a460" />
<rect x="421" y="292" width="55" height="1" fill="#f4a460" />
<rect x="229" y="132" width="190" height="1" fill="#00bfff" />
<rect x="229" y="373" width="190" height="1" fill="#00bfff" />
<rect x="14" y="449" width="1" height="16" fill="#00ff00" />
<rect x="16" y="456" width="1" height="12" fill="#00ff00" />
<rect x="18" y="456" width="1" height="15" fill="#00ff00" />
<rect x="20" y="455" width="1" height="18" fill="#00ff00" />
<rect x="22" y="460" width="1" height="9" fill="#00ff00" />
<rect x="24" y="464" width="1" height="8" fill="#00ff00" />
<rect x="26" y="466" width="1" height="8" fill="#00ff00" />
<rect x="28" y="461" width="1" height="14" fill="#00ff00" />
<rect x="30" y="460" width="1" height="13" fill="#00ff00" />
<rect x="32" y="460" width="1" height="10" fill="#00ff00" />
<rect x="34" y="457" width="1" height="21" fill="#00ff00" />
<rect x="36" y="465" width="1" height="15" fill="#00ff00" />
<rect x="38" y="465" width="1" height="12" fill="#00ff00" />
<rect x="40" y="461" width="1" height="16" fill="#00ff00" />
<rect x="42" y="461" width="1" height="12" fill="#00ff00" />
<rect x="44" y="467" width="1" height="8" fill="#00ff00" />
<rect x="46" y="462" width="1" height="11" fill="#00ff00" />
<rect x="48" y="461" width="1" height="11" fill="#00ff00" />
<rect x="50" y="462" width="1" height="11" fill="#00ff00" />
<rect x="52" y="464" width="1" height="9" fill="#00ff00" />
<rect x="54" y="459" width="1" height="13" fill="#00ff00" />
<rect x="56" y="454" width="1" height="9" fill="#00ff00" />
<rect x="58" y="455" width="1" height="8" fill="#00ff00" />
<rect x="60" y="451" width="1" height="21" fill="#00ff00" />
<rect x="62" y="447" width="1" height="8" fill="#00ff00" />
<rect x="64" y="449" width="1" height="7" fill="#00ff00" />
<rect x="66" y="445" width="1" height="11" fill="#00ff00" />
<rect x="68" y="447" width="1" height="9" fill="#00ff00" />
<rect x="70" y="445" width="1" height="10" fill="#00ff00" />
<rect x="72" y="436" width="1" height="12" fill="#00ff00" />
<rect x="74" y="435" width="1" height="13" fill="#00ff00" />
<rect x="76" y="431" width="1" height="18" fill="#00ff00" />
<rect x="78" y="440" width="1" height="9" fill="#00ff00" />
<rect x="80" y="441" width="1" height="14" fill="#00ff00" />
<rect x="82" y="450" width="1" height="8" fill="#00ff00" />
<rect x="84" y="450" width="1" height="10" fill="#00ff00" />
<rect x="86" y="451" width="1" height="14" fill="#00ff00" />
<rect x="88" y="457" width="1" height="8" fill="#00ff00" />
<rect x="90" y="455" width="1" height="13" fill="#00ff00" />
<rect x="92" y="456" width="1" height="16" fill="#00ff00" />
<rect x="94" y="461" width="1" height="13" fill="#00ff00" />
<rect x="96" y="465" width="1" height="13" fill="#00ff00" />
<rect x="98" y="464" width="1" height="11" fill="#00ff00" />
<rect x="100" y="470" width="1" height="16" fill="#00ff00" />
<rect x="102" y="478" width="1" height="5" fill="#00ff00" />
<rect x="104" y="468" width="1" height="18" fill="#00ff00" />
<rect x="106" y="478" width="1" height="10" fill="#00ff00" />
<rect x="108" y="468" width="1" height="27" fill="#00ff00" />
<rect x="110" y="454" width="1" height="24" fill="#00ff00" />
<rect x="112" y="424" width="1" height="36" fill="#00ff00" />
<rect x="114" y="392" width="1" height="50" fill="#00ff00" />
<rect x="116" y="356" width="1" height="56" fill="#00ff00" />
<rect x="118" y="359" width="1" height="27" fill="#00ff00" />
<rect x="120" y="365" width="1" height="32" fill="#00ff00" />
<rect x="122" y="314" width="1" height="65" fill="#00ff00" />
<rect x="124" y="318" width="1" height="44" fill="#00ff00" />
<rect x="126" y="342" width="1" height="27" fill="#00ff00" />
<rect x="128" y="340" width="1" height="18" fill="#00ff00" />
<rect x="130" y="328" width="1" height="27" fill="#00ff00" />
<rect x="132" y="310" width="1" height="38" fill="#00ff00" />
<rect x="134" y="330" width="1" height="27" fill="#00ff00" />
<rect x="136" y="323" width="1" height="28" fill="#00ff00" />
<rect x="138" y="314" width="1" height="38" fill="#00ff00" />
<rect x="140" y="336" width="1" height="14" fill="#00ff00" />
<rect x="142" y="335" width="1" height="15" fill="#00ff00" />
<rect x="144" y="341" width="1" height="20" fill="#00ff00" />
<rect x="146" y="333" width="1" height="22" fill="#00ff00" />
<rect x="148" y="314" width="1" height="37" fill="#00ff00" />
<rect x="150" y="315" width="1" height="28" fill="#00ff00" />
<rect x="152" y="298" width="1" height="34" fill="#00ff00" />
<rect x="154" y="299" width="1" height="23" fill="#00ff00" />
<rect x="156" y="308" width="1" height="26" fill="#00ff00" />
<rect x="158" y="320" width="1" height="17" fill="#00ff00" />
<rect x="160" y="297" width="1" height="40" fill="#00ff00" />
<rect x="162" y="284" width="1" height="38" fill="#00ff00" />
<rect x="164" y="285" width="1" height="26" fill="#00ff00" />
<rect x="166" y="297" width="1" height="21" fill="#00ff00" />
<rect x="168" y="308" width="1" height="22" fill="#00ff00" />
<rect x="170" y="319" width="1" height="15" fill="#00ff00" />
<rect x="172" y="316" width="1" height="34" fill="#00ff00" />
<rect x="174" y="317" width="1" height="29" fill="#00ff00" />
<rect x="176" y="310" width="1" height="32" fill="#00ff00" />
<rect x="178" y="297" width="1" height="43" fill="#00ff00" />
<rect x="180" y="310" width="1" height="30" fill="#00ff00" />
<rect x="182" y="316" width="1" height="34" fill="#00ff00" />
<rect x="184" y="316" width="1" height="28" fill="#00ff00" />
<rect x="186" y="313" width="1" height="28" fill="#00ff00" />
<rect x="188" y="314" width="1" height="37" fill="#00ff00" />
<rect x="190" y="324" width="1" height="47" fill="#00ff00" />
<rect x="192" y="348" width="1" height="18" fill="#00ff00" />
<rect x="194" y="351" width="1" height="23" fill="#00ff00" />
<rect x="196" y="353" width="1" height="18" fill="#00ff00" />
<rect x="198" y="352" width="1" height="23" fill="#00ff00" />
<rect x="200" y="362" width="1" height="13" fill="#00ff00" />
<rect x="202" y="354" width="1" height="14" fill="#00ff00" />
<rect x="204" y="354" width="1" height="17" fill="#00ff00" />
<rect x="206" y="366" width="1" height="9" fill="#00ff00" />
<rect x="208" y="364" width="1" height="10" fill="#00ff00" />
<rect x="210" y="361" width="1" height="13" fill="#00ff00" />
<rect x="212" y="361" width="1" height="14" fill="#00ff00" />
<rect x="214" y="353" width="1" height="16" fill="#00ff00" />
<rect x="216" y="341" width="1" height="18" fill="#00ff00" />
<rect x="218" y="327" width="1" height="25" fill="#00ff00" />
<rect x="220" y="333" width="1" height="20" fill="#00ff00" />
<rect x="222" y="336" width="1" height="22" fill="#00ff00" />
<rect x="224" y="330" width="1" height="13" fill="#00ff00" />
<rect x="226" y="318" width="1" height="35" fill="#00ff00" />
<rect x="228" y="310" width="1" height="41" fill="#00ff00" />
<rect x="230" y="323" width="1" height="18" fill="#00ff00" />
<rect x="232" y="315" width="1" height="11" fill="#00ff00" />
<rect x="234" y="310" width="1" height="21" fill="#00ff00" />
<rect x="236" y="299" width="1" height="35" fill="#00ff00" />
<rect x="238" y="285" width="1" height="47" fill="#00ff00" />
<rect x="240" y="294" width="1" height="35" fill="#00ff00" />
<rect x="242" y="282" width="1" height="47" fill="#00ff00" />
<rect x="244" y="306" width="1" height="20" fill="#00ff00" />
<rect x="246" y="315" width="1" height="22" fill="#00ff00" />
<rect x="248" y="327" width="1" height="14" fill="#00ff00" />
<rect x="250" y="317" width="1" height="24" fill="#00ff00" />
<rect x="252" y="300" width="1" height="37" fill="#00ff00" />
<rect x="254" y="298" width="1" height="13" fill="#00ff00" />
<rect x="256" y="296" width="1" height="11" fill="#00ff00" />
<rect x="258" y="278" width="1" height="19" fill="#00ff00" />
<rect x="260" y="288" width="1" height="26" fill="#00ff00" />
<rect x="262" y="296" width="1" height="14" fill="#00ff00" />
<rect x="264" y="297" width="1" height="21" fill="#00ff00" />
<rect x="266" y="314" width="1" height="21" fill="#00ff00" />
<rect x="268" y="321" width="1" height="13" fill="#00ff00" />
<rect x="270" y="308" width="1" height="21" fill="#00ff00" />
<rect x="272" y="306" width="1" height="27" fill="#00ff00" />
<rect x="274" y="310" width="1" height="21" fill="#00ff00" />
<rect x="276" y="306" width="1" height="8" fill="#00ff00" />
<rect x="278" y="303" width="1" height="14" fill="#00ff00" />
<rect x="280" y="290" width="1" height="21" fill="#00ff00" />
<rect x="282" y="288" width="1" height="11" fill="#00ff00" />
<rect x="284" y="289" width="1" height="27" fill="#00ff00" />
<rect x="286" y="310" width="1" height="11" fill="#00ff00" />
<rect x="288" y="319" width="1" height="8" fill="#00ff00" />
<rect x="290" y="319" width="1" height="22" fill="#00ff00" />
<rect x="292" y="327" width="1" height="27" fill="#00ff00" />
<rect x="294" y="339" width="1" height="12" fill="#00ff00" />
<rect x="296" y="348" width="1" height="16" fill="#00ff00" />
<rect x="298" y="357" width="1" height="17" fill="#00ff00" />
<rect x="300" y="345" width="1" height="12" fill="#00ff00" />
<rect x="302" y="347" width="1" height="23" fill="#00ff00" />
<rect x="304" y="340" width="1" height="23" fill="#00ff00" />
<rect x="306" y="343" width="1" height="16" fill="#00ff00" />
<rect x="308" y="324" width="1" height="36" fill="#00ff00" />
<rect x="310" y="331" width="1" height="23" fill="#00ff00" />
<rect x="312" y="305" width="1" height="27" fill="#00ff00" />
<rect x="314" y="297" width="1" height="30" fill="#00ff00" />
<rect x="316" y="295" width="1" height="31" fill="#00ff00" />
<rect x="318" y="309" width="1" height="28" fill="#00ff00" />
<rect x="320" y="314" width="1" height="37" fill="#00ff00" />
<rect x="322" y="322" width="1" height="16" fill="#00ff00" />
<rect x="324" y="323" width="1" height="18" fill="#00ff00" />
<rect x="326" y="326" width="1" height="15" fill="#00ff00" />
<rect x="328" y="306" width="1" height="44" fill="#00ff00" />
<rect x="330" y="302" width="1" height="22" fill="#00ff00" />
<rect x="332" y="299" width="1" height="35" fill="#00ff00" />
<rect x="334" y="311" width="1" height="20" fill="#00ff00" />
<rect x="336" y="322" width="1" height="24" fill="#00ff00" />
<rect x="338" y="323" width="1" height="22" fill="#00ff00" />
<rect x="340" y="315" width="1" height="17" fill="#00ff00" />
<rect x="342" y="276" width="1" height="43" fill="#00ff00" />
<rect x="344" y="273" width="1" height="20" fill="#00ff00" />
<rect x="346" y="276" width="1" height="19" fill="#00ff00" />
<rect x="348" y="266" width="1" height="17" fill="#00ff00" />
<rect x="350" y="203" width="1" height="78" fill="#00ff00" />
<rect x="352" y="209" width="1" height="42" fill="#00ff00" />
<rect x="354" y="132" width="1" height="89" fill="#00ff00" />
<rect x="356" y="144" width="1" height="132" fill="#00ff00" />
<rect x="358" y="234" width="1" height="43" fill="#00ff00" />
<rect x="360" y="229" width="1" height="44" fill="#00ff00" />
<rect x="362" y="243" width="1" height="32" fill="#00ff00" />
<rect x="364" y="200" width="1" height="51" fill="#00ff00" />
<rect x="366" y="205" width="1" height="34" fill="#00ff00" />
<rect x="368" y="220" width="1" height="28" fill="#00ff00" />
<rect x="370" y="229" width="1" height="45" fill="#00ff00" />
<rect x="372" y="270" width="1" height="22" fill="#00ff00" />
<rect x="374" y="267" width="1" height="39" fill="#00ff00" />
<rect x="376" y="271" width="1" height="15" fill="#00ff00" />
<rect x="378" y="256" width="1" height="34" fill="#00ff00" />
<rect x="380" y="242" width="1" height="19" fill="#00ff00" />
<rect x="382" y="249" width="1" height="14" fill="#00ff00" />
<rect x="384" y="246" width="1" height="13" fill="#00ff00" />
<rect x="386" y="257" width="1" height="17" fill="#00ff00" />
<rect x="388" y="256" width="1" height="17" fill="#00ff00" />
<rect x="390" y="263" width="1" height="10" fill="#00ff00" />
<rect x="392" y="250" width="1" height="31" fill="#00ff00" />
<rect x="394" y="252" width="1" height="11" fill="#00ff00" />
<rect x="396" y="258" width="1" height="9" fill="#00ff00" />
<rect x="398" y="267" width="1" height="14" fill="#00ff00" />
<rect x="400" y="271" width="1" height="23" fill="#00ff00" />
<rect x="402" y="290" width="1" height="8" fill="#00ff00" />
<rect x="404" y="294" width="1" height="7" fill="#00ff00" />
<rect x="406" y="283" width="1" height="19" fill="#00ff00" />
<rect x="408" y="279" width="1" height="17" fill="#00ff00" />
<rect x="410" y="266" width="1" height="16" fill="#00ff00" />
<rect x="412" y="275" width="1" height="6" fill="#00ff00" />
<rect x="414" y="273" width="1" height="5" fill="#00ff00" />
<rect x="416" y="266" width="1" height="10" fill="#00ff00" />
<rect x="418" y="262" width="1" height="88" fill="#00ff00" />
<rect x="420" y="241" width="1" height="71" fill="#00ff00" />
<rect x="422" y="263" width="1" height="22" fill="#00ff00" />
<rect x="424" y="224" width="1" height="49" fill="#00ff00" />
<rect x="426" y="232" width="1" height="10" fill="#00ff00" />
<rect x="428" y="236" width="1" height="21" fill="#00ff00" />
<rect x="430" y="238" width="1" height="13" fill="#00ff00" />
<rect x="432" y="244" width="1" height="16" fill="#00ff00" />
<rect x="434" y="255" width="1" height="8" fill="#00ff00" />
<rect x="436" y="255" width="1" height="9" fill="#00ff00" />
<rect x="438" y="255" width="1" height="12" fill="#00ff00" />
<rect x="440" y="255" width="1" height="14" fill="#00ff00" />
<rect x="442" y="255" width="1" height="7" fill="#00ff00" />
<rect x="444" y="251" width="1" height="9" fill="#00ff00" />
<rect x="446" y="252" width="1" height="11" fill="#00ff00" />
<rect x="448" y="248" width="1" height="11" fill="#00ff00" />
<rect x="450" y="238" width="1" height="18" fill="#00ff00" />
<rect x="452" y="241" width="1" height="15" fill="#00ff00" />
<rect x="454" y="246" width="1" height="11" fill="#00ff00" />
<rect x="456" y="244" width="1" height="13" fill="#00ff00" />
<rect x="458" y="248" width="1" height="12" fill="#00ff00" />
<rect x="460" y="252" width="1" height="12" fill="#00ff00" />
<rect x="462" y="258" width="1" height="14" fill="#00ff00" />
<rect x="464" y="270" width="1" height="9" fill="#00ff00" />
<rect x="466" y="274" width="1" height="15" fill="#00ff00" />
<rect x="468" y="283" width="1" height="6" fill="#00ff00" />
<rect x="470" y="279" width="1" height="13" fill="#00ff00" />
<rect x="472" y="267" width="1" height="15" fill="#00ff00" />
<rect x="474" y="250" width="1" height="23" fill="#00ff00" />
<rect x="476" y="250" width="1" height="13" fill="#00ff00" />
<rect x="478" y="219" width="1" height="43" fill="#00ff00" />
<rect x="480" y="204" width="1" height="25" fill="#00ff00" />
<rect x="482" y="220" width="1" height="15" fill="#00ff00" />
<rect x="484" y="227" width="1" height="15" fill="#00ff00" />
<rect x="486" y="224" width="1" height="16" fill="#00ff00" />
<rect x="488" y="221" width="1" height="15" fill="#00ff00" />
<rect x="616" y="114" width="3" height="1" fill="#fff" />
<rect x="616" y="150" width="3" height="1" fill="#fff" />
<rect x="616" y="187" width="3" height="1" fill="#fff" />
<rect x="616" y="223" width="3" height="1" fill="#fff" />
<rect x="616" y="259" width="3" height="1" fill="#fff" />
<rect x="616" y="292" width="3" height="1" fill="#fff" />
<rect x="616" y="328" width="3" height="1" fill="#fff" />
<rect x="616" y="361" width="3" height="1" fill="#fff" />
<rect x="616" y="397" width="3" height="1" fill="#fff" />
<rect x="616" y="430" width="3" height="1" fill="#fff" />
<rect x="616" y="466" width="3" height="1" fill="#fff" />
<rect x="616" y="502" width="3" height="1" fill="#fff" />
<rect x="616" y="647" width="3" height="1" fill="#fff" />
<rect x="14" y="709" width="1" height="3" fill="#fff" />
<rect x="78" y="709" width="1" height="3" fill="#fff" />
<rect x="142" y="709" width="1" height="3" fill="#fff" />
<rect x="206" y="709" width="1" height="3" fill="#fff" />
<rect x="270" y="709" width="1" height="3" fill="#fff" />
<rect x="334" y="709" width="1" height="3" fill="#fff" />
<rect x="398" y="709" width="1" height="3" fill="#fff" />
<rect x="462" y="709" width="1" height="3" fill="#fff" />
<line x1="14" y1="647.5" x2="615" y2="647.5" stroke="#fff" stroke-width="1" stroke-dasharray="3 3" stroke-dashoffset="0"/>
<rect x="617" y="224" width="41" height="11" fill="#fff" />
<polygon points="489,109 498.5,109 493.7,114" fill="#778899"/>
</g>
<text x="621" y="117" fill="#fff" font-size="9.7" textLength="33.3" lengthAdjust="spacingAndGlyphs" >0.79355</text>
<text x="621" y="153" fill="#fff" font-size="9.7" textLength="33.3" lengthAdjust="spacingAndGlyphs" >0.79310</text>
<text x="621" y="190" fill="#fff" font-size="9.7" textLength="33.3" lengthAdjust="spacingAndGlyphs" >0.79265</text>
<text x="621" y="226" fill="#fff" font-size="9.7" textLength="33.3" lengthAdjust="spacingAndGlyphs" >0.79220</text>
<text x="621" y="262" fill="#fff" font-size="9.7" textLength="33.3" lengthAdjust="spacingAndGlyphs" >0.79175</text>
<text x="621" y="295" fill="#fff" font-size="9.7" textLength="33.3" lengthAdjust="spacingAndGlyphs" >0.79135</text>
<text x="621" y="331" fill="#fff" font-size="9.7" textLength="33.3" lengthAdjust="spacingAndGlyphs" >0.79090</text>
<text x="621" y="364" fill="#fff" font-size="9.7" textLength="33.3" lengthAdjust="spacingAndGlyphs" >0.79050</text>
<text x="621" y="400" fill="#fff" font-size="9.7" textLength="33.3" lengthAdjust="spacingAndGlyphs" >0.79005</text>
<text x="621" y="433" fill="#fff" font-size="9.7" textLength="33.3" lengthAdjust="spacingAndGlyphs" >0.78965</text>
<text x="621" y="469" fill="#fff" font-size="9.7" textLength="33.3" lengthAdjust="spacingAndGlyphs" >0.78920</text>
<text x="621" y="505" fill="#fff" font-size="9.7" textLength="33.3" lengthAdjust="spacingAndGlyphs" >0.78875</text>
<text x="621" y="233" fill="#000" font-size="9.7" textLength="33.3" lengthAdjust="spacingAndGlyphs" >0.79211</text>
<text x="621" y="520" fill="#fff" font-size="9.7" textLength="38.4" lengthAdjust="spacingAndGlyphs" >0.001446</text>
<text x="621" y="649" fill="#fff" font-size="9.7" textLength="17.9" lengthAdjust="spacingAndGlyphs" >0.00</text>
<text x="621" y="704" fill="#fff" font-size="9.7" textLength="41.5" lengthAdjust="spacingAndGlyphs" >-0.000641</text>
<text x="29" y="120" fill="#fff" font-size="9.7" textLength="205.5" lengthAdjust="spacingAndGlyphs" >EURGBP,M15&#160;&#160;0.79211 0.79211 0.79211 0.79211</text>
<polygon points="17.5,115 24.5,115 21,118.7" fill="#fff"/>
<text x="18" y="522" fill="#fff" font-size="9.7" textLength="79.4" lengthAdjust="spacingAndGlyphs" >AO_Zotik 0.000286</text>
<text x="13" y="720.5" fill="#fff" font-size="9.7" textLength="47.7" lengthAdjust="spacingAndGlyphs" >16 Jul 2014</text>
<text x="77" y="720.5" fill="#fff" font-size="9.7" textLength="50.2" lengthAdjust="spacingAndGlyphs" >17 Jul 05:15</text>
<text x="141" y="720.5" fill="#fff" font-size="9.7" textLength="50.2" lengthAdjust="spacingAndGlyphs" >17 Jul 13:15</text>
<text x="205" y="720.5" fill="#fff" font-size="9.7" textLength="50.2" lengthAdjust="spacingAndGlyphs" >17 Jul 21:15</text>
<text x="269" y="720.5" fill="#fff" font-size="9.7" textLength="50.2" lengthAdjust="spacingAndGlyphs" >18 Jul 05:15</text>
<text x="333" y="720.5" fill="#fff" font-size="9.7" textLength="50.2" lengthAdjust="spacingAndGlyphs" >18 Jul 13:15</text>
<text x="397" y="720.5" fill="#fff" font-size="9.7" textLength="50.2" lengthAdjust="spacingAndGlyphs" >18 Jul 21:15</text>
<text x="461" y="720.5" fill="#fff" font-size="9.7" textLength="50.2" lengthAdjust="spacingAndGlyphs" >21 Jul 05:15</text>
<clipPath id="cl1"><rect x="14" y="510" width="601" height="198"/></clipPath><g clip-path="url(#cl1)">
<polyline points="14.2,643.5 22.0,645.2 30.4,640.0 37.0,639.4 45.6,643.5 52.3,645.2 60.8,640.0 69.2,635.0 76.0,634.0 84.4,636.0 94.5,640.0 103.0,645.2 108.0,647.5 114.8,641.8 123.2,630.0 131.7,623.9 141.8,621.5 152.0,623.2 162.0,630.0 168.8,638.4 175.6,648.5 184.0,658.7 192.4,663.7 202.6,666.0 212.7,667.1 219.4,662.0 229.6,652.0 239.7,643.5 249.8,640.0 260.0,635.7 266.7,640.0 276.8,645.8 287.0,650.2 297.0,658.0 307.2,658.7 317.4,654.6 327.5,653.6 340.5,646.0 349.0,635.2 355.8,626.7 362.5,626.0 369.3,628.4 376.0,638.6 384.5,640.3 393.0,643.6 401.4,653.8 408.0,662.2 415.0,665.6 420.0,660.5 426.7,650.4 435.2,645.3 443.6,644.6 452.0,641.9 460.5,641.3 467.3,643.6 474.0,648.0 482.5,647.0 491.0,647.7" fill="none" stroke="#fff" stroke-width="1" stroke-linejoin="round" stroke-linecap="round" />
<polyline points="14.2,698.5 27.0,695.8 40.5,690.8 54.0,684.0 67.5,672.2 77.7,665.4 87.8,663.0 97.9,664.4 108.0,667.1 114.8,652.0 123.2,630.0 130.0,618.2 138.4,609.7 148.5,607.4 155.3,603.0 165.4,598.9 172.2,603.6 184.0,609.7 192.4,618.2 202.6,630.0 212.7,637.7 222.8,636.7 233.0,632.7 241.4,628.3 251.5,630.0 261.6,626.0 270.0,629.0 283.6,629.3 290.3,635.0 297.0,643.5 307.2,648.5 317.4,645.2 327.5,644.5 333.8,643.6 340.5,644.6 347.3,635.2 354.0,616.6 360.8,614.2 367.6,610.5 374.3,617.6 382.8,618.3 393.0,623.3 404.8,635.2 415.0,636.9 421.7,637.9 430.0,632.8 438.6,634.5 447.0,634.2 455.5,633.5 462.2,636.9 469.0,641.9 475.7,642.6 482.5,637.9 491.0,634.2" fill="none" stroke="#008000" stroke-width="2.0" stroke-linejoin="round" stroke-linecap="round" />
<polyline points="14.2,688.0 21.0,687.4 28.7,682.3 33.8,672.2 38.8,671.2 45.6,667.1 53.0,663.0 59.0,652.0 65.8,638.4 72.6,630.0 77.0,624.2 81.0,630.0 86.0,641.8 94.5,653.6 101.3,663.7 106.3,668.0 109.7,665.4 113.0,635.0 117.5,577.6 121.5,550.6 126.0,538.8 130.0,545.6 134.0,541.5 138.4,549.0 143.5,567.5 147.5,572.6 152.0,562.5 155.3,560.0 159.4,576.0 164.4,571.0 167.0,579.3 170.5,608.0 175.6,628.3 182.3,633.4 189.0,650.2 194.0,675.6 199.0,684.0 206.0,682.3 211.0,685.0 216.0,675.6 219.4,655.3 224.5,646.9 229.6,635.0 236.3,618.2 242.0,608.7 246.5,616.5 250.5,633.4 255.0,614.8 259.3,600.3 263.3,604.7 268.4,635.0 273.5,638.4 278.5,635.0 283.6,626.6 287.0,631.7 290.3,652.0 295.4,679.0 300.5,693.0 306.8,682.5 311.8,662.2 316.2,637.9 319.6,640.3 323.7,653.8 328.7,650.4 333.8,635.2 337.9,648.7 341.2,647.0 345.6,608.0 350.7,577.7 354.0,530.4 356.4,520.3 359.0,533.8 362.5,584.5 367.6,567.6 371.0,591.2 376.0,638.6 379.4,640.3 383.8,618.3 388.5,633.5 393.0,638.6 398.0,648.7 403.0,672.4 407.5,684.2 411.5,675.7 415.0,665.6 418.3,672.4 421.7,670.7 425.0,642.0 428.4,620.0 431.8,621.7 436.9,633.5 442.0,638.6 447.7,636.9 453.8,627.8 458.8,631.8 463.9,645.3 467.3,662.2 470.7,669.0 474.0,658.8 477.4,635.2 480.8,613.2 484.2,611.5 486.5,620.0 491.0,621.0" fill="none" stroke="#ff0000" stroke-width="2.0" stroke-linejoin="round" stroke-linecap="round" />
</g>
<clipPath id="cl0"><rect x="14" y="109" width="644" height="398"/></clipPath><g clip-path="url(#cl0)">
<line x1="112" y1="498.4" x2="620" y2="258.7" stroke="#9966cc" stroke-width="5"/>
<line x1="312" y1="362.5" x2="596" y2="362.5" stroke="#ffa200" stroke-width="5"/><circle cx="312.6" cy="362.6" r="5" fill="#ffa200"/>
<ellipse cx="478" cy="351.5" rx="52" ry="63" fill="none" stroke="#008a00" stroke-width="1.9"/>
<line x1="474" y1="284" x2="557.5" y2="132.5" stroke="#c80000" stroke-width="3.7"/><polygon points="564.8,120.9 564.1,137.2 551.1,129.9" fill="#c80000"/>
<polygon points="118,428 128,428 128,439 118,439 116,437 120,433.5 116,430.5" fill="#ff0000"/>
<polygon points="288.75,282.8 294.7,288.4 294.7,283.1 298.1,285.9 298.1,294.1 289.1,294.1 286.25,291.25 291.9,291.25 286.25,285.3" fill="#ff0000"/>
<polygon points="350.00,283.00 350.00,290.90 347.20,293.75 347.20,288.40 340.60,294.10 338.10,291.90 344.40,286.25 338.10,286.60 341.60,283.00" fill="#ff0000"/>
<polygon points="490.00,226.00 490.00,233.90 487.20,236.75 487.20,231.40 480.60,237.10 478.10,234.90 484.40,229.25 478.10,229.60 481.60,226.00" fill="#ff0000"/>
</g>
<g shape-rendering="crispEdges">
<rect x="669" y="103" width="601" height="623" fill="#fff" />
<rect x="671" y="105" width="557" height="1" fill="#000" />
<rect x="671" y="504" width="557" height="1" fill="#000" />
<rect x="671" y="105" width="1" height="400" fill="#000" />
<rect x="1227" y="105" width="1" height="400" fill="#000" />
<rect x="671" y="506" width="557" height="1" fill="#000" />
<rect x="671" y="619" width="557" height="1" fill="#000" />
<rect x="671" y="506" width="1" height="114" fill="#000" />
<rect x="1227" y="506" width="1" height="114" fill="#000" />
<rect x="671" y="621" width="557" height="1" fill="#000" />
<rect x="671" y="707" width="557" height="1" fill="#000" />
<rect x="671" y="621" width="1" height="87" fill="#000" />
<rect x="1227" y="621" width="1" height="87" fill="#000" />
<line x1="688.5" y1="106" x2="688.5" y2="707" stroke="#000" stroke-width="1" stroke-dasharray="3 3" stroke-dashoffset="1"/>
<line x1="748.5" y1="106" x2="748.5" y2="707" stroke="#000" stroke-width="1" stroke-dasharray="3 3" stroke-dashoffset="1"/>
<line x1="808.5" y1="106" x2="808.5" y2="707" stroke="#000" stroke-width="1" stroke-dasharray="3 3" stroke-dashoffset="1"/>
<line x1="868.5" y1="106" x2="868.5" y2="707" stroke="#000" stroke-width="1" stroke-dasharray="3 3" stroke-dashoffset="1"/>
<line x1="928.5" y1="106" x2="928.5" y2="707" stroke="#000" stroke-width="1" stroke-dasharray="3 3" stroke-dashoffset="1"/>
<line x1="988.5" y1="106" x2="988.5" y2="707" stroke="#000" stroke-width="1" stroke-dasharray="3 3" stroke-dashoffset="1"/>
<line x1="1048.5" y1="106" x2="1048.5" y2="707" stroke="#000" stroke-width="1" stroke-dasharray="3 3" stroke-dashoffset="1"/>
<line x1="1108.5" y1="106" x2="1108.5" y2="707" stroke="#000" stroke-width="1" stroke-dasharray="3 3" stroke-dashoffset="1"/>
<line x1="1180.5" y1="106" x2="1180.5" y2="707" stroke="#000" stroke-width="1" stroke-dasharray="3 3" stroke-dashoffset="1"/>
<rect x="672" y="447" width="555" height="1" fill="#778899" />
<rect x="672" y="130" width="1" height="20" fill="#00ff00" />
<rect x="674" y="137" width="1" height="10" fill="#00ff00" />
<rect x="676" y="142" width="1" height="9" fill="#00ff00" />
<rect x="678" y="144" width="1" height="15" fill="#00ff00" />
<rect x="680" y="146" width="1" height="21" fill="#00ff00" />
<rect x="682" y="140" width="1" height="19" fill="#00ff00" />
<rect x="684" y="141" width="1" height="17" fill="#00ff00" />
<rect x="686" y="141" width="1" height="11" fill="#00ff00" />
<rect x="688" y="143" width="1" height="10" fill="#00ff00" />
<rect x="690" y="136" width="1" height="17" fill="#00ff00" />
<rect x="692" y="135" width="1" height="40" fill="#00ff00" />
<rect x="694" y="151" width="1" height="20" fill="#00ff00" />
<rect x="696" y="152" width="1" height="19" fill="#00ff00" />
<rect x="698" y="161" width="1" height="12" fill="#00ff00" />
<rect x="700" y="165" width="1" height="6" fill="#00ff00" />
<rect x="702" y="160" width="1" height="8" fill="#00ff00" />
<rect x="704" y="159" width="1" height="27" fill="#00ff00" />
<rect x="706" y="127" width="1" height="61" fill="#00ff00" />
<rect x="708" y="135" width="1" height="17" fill="#00ff00" />
<rect x="710" y="143" width="1" height="6" fill="#00ff00" />
<rect x="712" y="140" width="1" height="8" fill="#00ff00" />
<rect x="714" y="136" width="1" height="11" fill="#00ff00" />
<rect x="716" y="125" width="1" height="24" fill="#00ff00" />
<rect x="718" y="139" width="1" height="22" fill="#00ff00" />
<rect x="720" y="148" width="1" height="15" fill="#00ff00" />
<rect x="722" y="156" width="1" height="13" fill="#00ff00" />
<rect x="724" y="158" width="1" height="7" fill="#00ff00" />
<rect x="726" y="161" width="1" height="8" fill="#00ff00" />
<rect x="728" y="158" width="1" height="14" fill="#00ff00" />
<rect x="730" y="141" width="1" height="105" fill="#00ff00" />
<rect x="732" y="165" width="1" height="71" fill="#00ff00" />
<rect x="734" y="156" width="1" height="22" fill="#00ff00" />
<rect x="736" y="154" width="1" height="13" fill="#00ff00" />
<rect x="738" y="158" width="1" height="5" fill="#00ff00" />
<rect x="740" y="159" width="1" height="24" fill="#00ff00" />
<rect x="742" y="163" width="1" height="34" fill="#00ff00" />
<rect x="744" y="157" width="1" height="20" fill="#00ff00" />
<rect x="746" y="167" width="1" height="9" fill="#00ff00" />
<rect x="748" y="165" width="1" height="9" fill="#00ff00" />
<rect x="750" y="166" width="1" height="7" fill="#00ff00" />
<rect x="752" y="164" width="1" height="19" fill="#00ff00" />
<rect x="754" y="176" width="1" height="26" fill="#00ff00" />
<rect x="756" y="197" width="1" height="16" fill="#00ff00" />
<rect x="758" y="206" width="1" height="7" fill="#00ff00" />
<rect x="760" y="208" width="1" height="7" fill="#00ff00" />
<rect x="762" y="212" width="1" height="9" fill="#00ff00" />
<rect x="764" y="203" width="1" height="43" fill="#00ff00" />
<rect x="766" y="223" width="1" height="25" fill="#00ff00" />
<rect x="768" y="214" width="1" height="15" fill="#00ff00" />
<rect x="770" y="214" width="1" height="9" fill="#00ff00" />
<rect x="772" y="215" width="1" height="11" fill="#00ff00" />
<rect x="774" y="223" width="1" height="10" fill="#00ff00" />
<rect x="776" y="217" width="1" height="43" fill="#00ff00" />
<rect x="778" y="227" width="1" height="35" fill="#00ff00" />
<rect x="780" y="232" width="1" height="31" fill="#00ff00" />
<rect x="782" y="251" width="1" height="12" fill="#00ff00" />
<rect x="784" y="249" width="1" height="6" fill="#00ff00" />
<rect x="786" y="245" width="1" height="8" fill="#00ff00" />
<rect x="788" y="247" width="1" height="40" fill="#00ff00" />
<rect x="790" y="273" width="1" height="19" fill="#00ff00" />
<rect x="792" y="248" width="1" height="35" fill="#00ff00" />
<rect x="794" y="253" width="1" height="80" fill="#00ff00" />
<rect x="796" y="326" width="1" height="23" fill="#00ff00" />
<rect x="798" y="331" width="1" height="19" fill="#00ff00" />
<rect x="800" y="336" width="1" height="22" fill="#00ff00" />
<rect x="802" y="336" width="1" height="35" fill="#00ff00" />
<rect x="804" y="353" width="1" height="23" fill="#00ff00" />
<rect x="806" y="358" width="1" height="17" fill="#00ff00" />
<rect x="808" y="368" width="1" height="11" fill="#00ff00" />
<rect x="810" y="370" width="1" height="7" fill="#00ff00" />
<rect x="812" y="370" width="1" height="24" fill="#00ff00" />
<rect x="814" y="350" width="1" height="32" fill="#00ff00" />
<rect x="816" y="344" width="1" height="25" fill="#00ff00" />
<rect x="818" y="346" width="1" height="9" fill="#00ff00" />
<rect x="820" y="331" width="1" height="19" fill="#00ff00" />
<rect x="822" y="334" width="1" height="18" fill="#00ff00" />
<rect x="824" y="324" width="1" height="37" fill="#00ff00" />
<rect x="826" y="326" width="1" height="35" fill="#00ff00" />
<rect x="828" y="350" width="1" height="13" fill="#00ff00" />
<rect x="830" y="353" width="1" height="6" fill="#00ff00" />
<rect x="832" y="352" width="1" height="7" fill="#00ff00" />
<rect x="834" y="354" width="1" height="5" fill="#00ff00" />
<rect x="836" y="331" width="1" height="49" fill="#00ff00" />
<rect x="838" y="318" width="1" height="22" fill="#00ff00" />
<rect x="840" y="313" width="1" height="19" fill="#00ff00" />
<rect x="842" y="311" width="1" height="39" fill="#00ff00" />
<rect x="844" y="333" width="1" height="13" fill="#00ff00" />
<rect x="846" y="337" width="1" height="8" fill="#00ff00" />
<rect x="848" y="301" width="1" height="41" fill="#00ff00" />
<rect x="850" y="315" width="1" height="29" fill="#00ff00" />
<rect x="852" y="330" width="1" height="26" fill="#00ff00" />
<rect x="854" y="347" width="1" height="15" fill="#00ff00" />
<rect x="856" y="347" width="1" height="12" fill="#00ff00" />
<rect x="858" y="347" width="1" height="9" fill="#00ff00" />
<rect x="860" y="341" width="1" height="30" fill="#00ff00" />
<rect x="862" y="359" width="1" height="21" fill="#00ff00" />
<rect x="864" y="352" width="1" height="29" fill="#00ff00" />
<rect x="866" y="344" width="1" height="14" fill="#00ff00" />
<rect x="868" y="350" width="1" height="11" fill="#00ff00" />
<rect x="870" y="351" width="1" height="10" fill="#00ff00" />
<rect x="872" y="353" width="1" height="15" fill="#00ff00" />
<rect x="874" y="340" width="1" height="30" fill="#00ff00" />
<rect x="876" y="343" width="1" height="16" fill="#00ff00" />
<rect x="878" y="344" width="1" height="12" fill="#00ff00" />
<rect x="880" y="348" width="1" height="8" fill="#00ff00" />
<rect x="882" y="351" width="1" height="9" fill="#00ff00" />
<rect x="884" y="304" width="1" height="55" fill="#00ff00" />
<rect x="886" y="302" width="1" height="24" fill="#00ff00" />
<rect x="888" y="313" width="1" height="18" fill="#00ff00" />
<rect x="890" y="315" width="1" height="16" fill="#00ff00" />
<rect x="892" y="317" width="1" height="9" fill="#00ff00" />
<rect x="894" y="311" width="1" height="10" fill="#00ff00" />
<rect x="896" y="291" width="1" height="26" fill="#00ff00" />
<rect x="898" y="293" width="1" height="27" fill="#00ff00" />
<rect x="900" y="289" width="1" height="19" fill="#00ff00" />
<rect x="902" y="289" width="1" height="15" fill="#00ff00" />
<rect x="904" y="298" width="1" height="8" fill="#00ff00" />
<rect x="906" y="299" width="1" height="9" fill="#00ff00" />
<rect x="908" y="292" width="1" height="48" fill="#00ff00" />
<rect x="910" y="326" width="1" height="35" fill="#00ff00" />
<rect x="912" y="332" width="1" height="26" fill="#00ff00" />
<rect x="914" y="338" width="1" height="11" fill="#00ff00" />
<rect x="916" y="340" width="1" height="9" fill="#00ff00" />
<rect x="918" y="339" width="1" height="8" fill="#00ff00" />
<rect x="920" y="328" width="1" height="17" fill="#00ff00" />
<rect x="922" y="327" width="1" height="22" fill="#00ff00" />
<rect x="924" y="313" width="1" height="24" fill="#00ff00" />
<rect x="926" y="311" width="1" height="19" fill="#00ff00" />
<rect x="928" y="310" width="1" height="21" fill="#00ff00" />
<rect x="930" y="315" width="1" height="7" fill="#00ff00" />
<rect x="932" y="301" width="1" height="23" fill="#00ff00" />
<rect x="934" y="298" width="1" height="32" fill="#00ff00" />
<rect x="936" y="317" width="1" height="22" fill="#00ff00" />
<rect x="938" y="326" width="1" height="11" fill="#00ff00" />
<rect x="940" y="329" width="1" height="7" fill="#00ff00" />
<rect x="942" y="331" width="1" height="6" fill="#00ff00" />
<rect x="944" y="325" width="1" height="26" fill="#00ff00" />
<rect x="946" y="344" width="1" height="24" fill="#00ff00" />
<rect x="948" y="357" width="1" height="14" fill="#00ff00" />
<rect x="950" y="365" width="1" height="10" fill="#00ff00" />
<rect x="952" y="364" width="1" height="9" fill="#00ff00" />
<rect x="954" y="366" width="1" height="9" fill="#00ff00" />
<rect x="956" y="371" width="1" height="35" fill="#00ff00" />
<rect x="958" y="388" width="1" height="14" fill="#00ff00" />
<rect x="960" y="392" width="1" height="14" fill="#00ff00" />
<rect x="962" y="392" width="1" height="11" fill="#00ff00" />
<rect x="964" y="395" width="1" height="6" fill="#00ff00" />
<rect x="966" y="391" width="1" height="8" fill="#00ff00" />
<rect x="968" y="375" width="1" height="24" fill="#00ff00" />
<rect x="970" y="376" width="1" height="37" fill="#00ff00" />
<rect x="972" y="413" width="1" height="22" fill="#00ff00" />
<rect x="974" y="427" width="1" height="8" fill="#00ff00" />
<rect x="976" y="428" width="1" height="9" fill="#00ff00" />
<rect x="978" y="435" width="1" height="12" fill="#00ff00" />
<rect x="980" y="436" width="1" height="15" fill="#00ff00" />
<rect x="982" y="432" width="1" height="16" fill="#00ff00" />
<rect x="984" y="437" width="1" height="12" fill="#00ff00" />
<rect x="986" y="442" width="1" height="8" fill="#00ff00" />
<rect x="988" y="441" width="1" height="11" fill="#00ff00" />
<rect x="990" y="439" width="1" height="8" fill="#00ff00" />
<rect x="992" y="430" width="1" height="27" fill="#00ff00" />
<rect x="994" y="411" width="1" height="26" fill="#00ff00" />
<rect x="996" y="414" width="1" height="10" fill="#00ff00" />
<rect x="998" y="415" width="1" height="8" fill="#00ff00" />
<rect x="1000" y="416" width="1" height="7" fill="#00ff00" />
<rect x="1002" y="416" width="1" height="13" fill="#00ff00" />
<rect x="1004" y="393" width="1" height="48" fill="#00ff00" />
<rect x="1006" y="400" width="1" height="22" fill="#00ff00" />
<rect x="1008" y="398" width="1" height="21" fill="#00ff00" />
<rect x="1010" y="411" width="1" height="6" fill="#00ff00" />
<rect x="1012" y="409" width="1" height="7" fill="#00ff00" />
<rect x="1014" y="406" width="1" height="7" fill="#00ff00" />
<rect x="1016" y="397" width="1" height="15" fill="#00ff00" />
<rect x="1018" y="394" width="1" height="12" fill="#00ff00" />
<rect x="1020" y="388" width="1" height="21" fill="#00ff00" />
<rect x="1022" y="394" width="1" height="9" fill="#00ff00" />
<rect x="1024" y="401" width="1" height="5" fill="#00ff00" />
<rect x="1026" y="397" width="1" height="12" fill="#00ff00" />
<rect x="1028" y="381" width="1" height="22" fill="#00ff00" />
<rect x="1030" y="382" width="1" height="27" fill="#00ff00" />
<rect x="1032" y="399" width="1" height="27" fill="#00ff00" />
<rect x="1034" y="414" width="1" height="15" fill="#00ff00" />
<rect x="1036" y="414" width="1" height="7" fill="#00ff00" />
<rect x="1038" y="418" width="1" height="6" fill="#00ff00" />
<rect x="1040" y="405" width="1" height="21" fill="#00ff00" />
<rect x="1042" y="412" width="1" height="14" fill="#00ff00" />
<rect x="1044" y="402" width="1" height="14" fill="#00ff00" />
<rect x="1046" y="396" width="1" height="26" fill="#00ff00" />
<rect x="1048" y="399" width="1" height="20" fill="#00ff00" />
<rect x="1050" y="407" width="1" height="10" fill="#00ff00" />
<rect x="1052" y="386" width="1" height="31" fill="#00ff00" />
<rect x="1054" y="365" width="1" height="36" fill="#00ff00" />
<rect x="1056" y="363" width="1" height="16" fill="#00ff00" />
<rect x="1058" y="371" width="1" height="10" fill="#00ff00" />
<rect x="1060" y="371" width="1" height="9" fill="#00ff00" />
<rect x="1062" y="370" width="1" height="9" fill="#00ff00" />
<rect x="1064" y="363" width="1" height="68" fill="#00ff00" />
<rect x="1066" y="423" width="1" height="18" fill="#00ff00" />
<rect x="1068" y="433" width="1" height="32" fill="#00ff00" />
<rect x="1070" y="456" width="1" height="4" fill="#00ff00" />
<rect x="1072" y="450" width="1" height="9" fill="#00ff00" />
<rect x="1074" y="452" width="1" height="6" fill="#00ff00" />
<rect x="1076" y="457" width="1" height="21" fill="#00ff00" />
<rect x="1078" y="469" width="1" height="18" fill="#00ff00" />
<rect x="1080" y="477" width="1" height="15" fill="#00ff00" />
<rect x="1082" y="481" width="1" height="8" fill="#00ff00" />
<rect x="1084" y="483" width="1" height="6" fill="#00ff00" />
<rect x="1086" y="477" width="1" height="13" fill="#00ff00" />
<rect x="1088" y="462" width="1" height="31" fill="#00ff00" />
<rect x="1090" y="456" width="1" height="15" fill="#00ff00" />
<rect x="1092" y="456" width="1" height="13" fill="#00ff00" />
<rect x="1094" y="461" width="1" height="6" fill="#00ff00" />
<rect x="1096" y="455" width="1" height="7" fill="#00ff00" />
<rect x="1098" y="457" width="1" height="12" fill="#00ff00" />
<rect x="1100" y="460" width="1" height="5" fill="#00ff00" />
<rect x="1102" y="430" width="1" height="38" fill="#00ff00" />
<rect x="1104" y="432" width="1" height="29" fill="#00ff00" />
<rect x="1106" y="451" width="1" height="19" fill="#00ff00" />
<rect x="1108" y="444" width="1" height="23" fill="#00ff00" />
<rect x="1110" y="449" width="1" height="10" fill="#00ff00" />
<rect x="1112" y="445" width="1" height="4" fill="#00ff00" />
<rect x="1228" y="138" width="3" height="1" fill="#000" />
<rect x="1228" y="171" width="3" height="1" fill="#000" />
<rect x="1228" y="204" width="3" height="1" fill="#000" />
<rect x="1228" y="237" width="3" height="1" fill="#000" />
<rect x="1228" y="270" width="3" height="1" fill="#000" />
<rect x="1228" y="303" width="3" height="1" fill="#000" />
<rect x="1228" y="336" width="3" height="1" fill="#000" />
<rect x="1228" y="369" width="3" height="1" fill="#000" />
<rect x="1228" y="402" width="3" height="1" fill="#000" />
<rect x="1228" y="435" width="3" height="1" fill="#000" />
<rect x="1228" y="468" width="3" height="1" fill="#000" />
<rect x="1228" y="501" width="3" height="1" fill="#000" />
<rect x="1228" y="540" width="3" height="1" fill="#000" />
<line x1="672" y1="540.5" x2="1227" y2="540.5" stroke="#000" stroke-width="1" stroke-dasharray="3 3" stroke-dashoffset="0"/>
<line x1="672" y1="639.5" x2="1227" y2="639.5" stroke="#000" stroke-width="1" stroke-dasharray="18 6" stroke-dashoffset="0"/>
<line x1="672" y1="664.5" x2="1227" y2="664.5" stroke="#000" stroke-width="1" stroke-dasharray="18 6" stroke-dashoffset="0"/>
<line x1="672" y1="690.5" x2="1227" y2="690.5" stroke="#000" stroke-width="1" stroke-dasharray="18 6" stroke-dashoffset="0"/>
<rect x="1229" y="441" width="41" height="11" fill="#000" />
<rect x="672" y="708" width="1" height="3" fill="#000" />
<rect x="736" y="708" width="1" height="3" fill="#000" />
<rect x="800" y="708" width="1" height="3" fill="#000" />
<rect x="864" y="708" width="1" height="3" fill="#000" />
<rect x="928" y="708" width="1" height="3" fill="#000" />
<rect x="992" y="708" width="1" height="3" fill="#000" />
<rect x="1056" y="708" width="1" height="3" fill="#000" />
<polygon points="1110,106 1120,106 1115,111" fill="#778899"/>
</g>
<text x="1233" y="141" fill="#000" font-size="9.7" textLength="33.3" lengthAdjust="spacingAndGlyphs" >0.81405</text>
<text x="1233" y="174" fill="#000" font-size="9.7" textLength="33.3" lengthAdjust="spacingAndGlyphs" >0.81170</text>
<text x="1233" y="207" fill="#000" font-size="9.7" textLength="33.3" lengthAdjust="spacingAndGlyphs" >0.80935</text>
<text x="1233" y="240" fill="#000" font-size="9.7" textLength="33.3" lengthAdjust="spacingAndGlyphs" >0.80700</text>
<text x="1233" y="273" fill="#000" font-size="9.7" textLength="33.3" lengthAdjust="spacingAndGlyphs" >0.80470</text>
<text x="1233" y="306" fill="#000" font-size="9.7" textLength="33.3" lengthAdjust="spacingAndGlyphs" >0.80235</text>
<text x="1233" y="339" fill="#000" font-size="9.7" textLength="33.3" lengthAdjust="spacingAndGlyphs" >0.80000</text>
<text x="1233" y="372" fill="#000" font-size="9.7" textLength="33.3" lengthAdjust="spacingAndGlyphs" >0.79765</text>
<text x="1233" y="405" fill="#000" font-size="9.7" textLength="33.3" lengthAdjust="spacingAndGlyphs" >0.79530</text>
<text x="1233" y="438" fill="#000" font-size="9.7" textLength="33.3" lengthAdjust="spacingAndGlyphs" >0.79295</text>
<text x="1233" y="471" fill="#000" font-size="9.7" textLength="33.3" lengthAdjust="spacingAndGlyphs" >0.79060</text>
<text x="1233" y="504" fill="#000" font-size="9.7" textLength="33.3" lengthAdjust="spacingAndGlyphs" >0.78825</text>
<text x="1233" y="450" fill="#fff" font-size="9.7" textLength="33.3" lengthAdjust="spacingAndGlyphs" >0.79211</text>
<clipPath id="clR"><rect x="669" y="103" width="601" height="623"/></clipPath><g clip-path="url(#clR)">
<text x="1231.2" y="516.5" fill="#000" font-size="9.7" textLength="38.4" lengthAdjust="spacingAndGlyphs" >0.003719</text>
<text x="1231.2" y="543" fill="#000" font-size="9.7" textLength="17.9" lengthAdjust="spacingAndGlyphs" >0.00</text>
<text x="1231.2" y="543" fill="#000" font-size="9.7" textLength="17.9" lengthAdjust="spacingAndGlyphs" >0.00</text>
<text x="1231.2" y="615.5" fill="#000" font-size="9.7" textLength="41.5" lengthAdjust="spacingAndGlyphs" >-0.008977</text>
</g>
<text x="1231" y="631.5" fill="#000" font-size="9.7" textLength="5.1" lengthAdjust="spacingAndGlyphs" >0</text>
<text x="1231" y="642" fill="#000" font-size="9.7" textLength="13.3" lengthAdjust="spacingAndGlyphs" >-20</text>
<text x="1231" y="667" fill="#000" font-size="9.7" textLength="13.3" lengthAdjust="spacingAndGlyphs" >-50</text>
<text x="1231" y="692.5" fill="#000" font-size="9.7" textLength="13.3" lengthAdjust="spacingAndGlyphs" >-80</text>
<text x="1231" y="703" fill="#000" font-size="9.7" textLength="18.4" lengthAdjust="spacingAndGlyphs" >-100</text>
<text x="687" y="117" fill="#000" font-size="9.7" textLength="199.4" lengthAdjust="spacingAndGlyphs" >EURGBP,H4&#160;&#160;0.79203 0.79222 0.79198 0.79211</text>
<polygon points="675.5,112.5 681.5,112.5 678.5,116" fill="#000"/>
<text x="676.5" y="519" fill="#000" font-size="9.7" textLength="84.0" lengthAdjust="spacingAndGlyphs" >AO_Zotik -0.000823</text>
<text x="676.5" y="634" fill="#000" font-size="9.7" textLength="161.0" lengthAdjust="spacingAndGlyphs" >WPR_VSmark(21|55|77|277) -88.4192</text>
<text x="671" y="720" fill="#000" font-size="9.7" textLength="53.3" lengthAdjust="spacingAndGlyphs" >29 May 2014</text>
<text x="736" y="720" fill="#000" font-size="9.7" textLength="48.2" lengthAdjust="spacingAndGlyphs" >6 Jun 00:00</text>
<text x="800" y="720" fill="#000" font-size="9.7" textLength="53.3" lengthAdjust="spacingAndGlyphs" >13 Jun 08:00</text>
<text x="864" y="720" fill="#000" font-size="9.7" textLength="53.3" lengthAdjust="spacingAndGlyphs" >20 Jun 16:00</text>
<text x="928" y="720" fill="#000" font-size="9.7" textLength="53.3" lengthAdjust="spacingAndGlyphs" >30 Jun 00:00</text>
<text x="992" y="720" fill="#000" font-size="9.7" textLength="45.1" lengthAdjust="spacingAndGlyphs" >7 Jul 08:00</text>
<text x="1056" y="720" fill="#000" font-size="9.7" textLength="50.2" lengthAdjust="spacingAndGlyphs" >14 Jul 16:00</text>
<clipPath id="cr1"><rect x="672" y="507" width="555" height="112"/></clipPath><g clip-path="url(#cr1)">
<polyline points="672.7,530.7 680.8,532.0 689.8,533.4 695.2,535.5 702.3,539.1 711.3,540.9 718.5,541.8 725.7,544.2 732.0,545.4 738.3,543.6 745.5,543.3 752.7,543.3 759.8,544.9 767.0,546.3 774.2,547.8 781.4,547.8 788.6,547.2 794.0,548.1 798.5,551.4 803.0,553.2 808.4,553.5 813.8,552.6 819.1,549.6 824.5,546.7 829.9,544.9 835.3,542.7 840.7,537.0 846.1,533.8 851.5,532.0 856.9,530.2 862.3,529.6 867.7,530.5 873.1,532.9 878.4,535.5 882.0,536.4 885.6,535.5 892.8,534.6 895.0,534.1 904.0,534.3 913.0,535.9 922.0,537.0 930.9,538.2 939.9,540.9 947.1,543.6 954.3,546.7 961.5,548.1 968.7,547.8 975.9,548.7 983.1,549.9 987.5,551.2 992.9,549.0 999.2,545.4 1006.4,540.0 1013.6,536.4 1020.8,533.4 1028.0,532.3 1035.2,532.0 1042.3,532.3 1049.5,534.1 1056.7,535.5 1063.9,536.4 1069.3,540.0 1074.7,543.1 1080.1,546.0 1085.5,547.8 1090.9,547.2 1098.1,546.0 1103.4,544.9 1108.8,543.6 1112.1,542.4" fill="none" stroke="#000" stroke-width="1" stroke-linejoin="round" stroke-linecap="round" />
<polyline points="672.7,541.8 679.0,540.0 686.2,538.8 693.4,539.1 700.5,540.0 705.9,540.0 712.2,538.2 718.5,537.9 725.7,539.1 731.1,541.8 738.3,542.7 745.5,543.1 751.8,543.1 758.1,546.3 765.2,550.8 772.4,552.1 779.6,556.2 786.8,558.0 792.2,559.8 795.8,564.3 801.2,571.5 806.6,576.0 812.0,578.7 817.3,578.7 822.7,576.9 828.1,575.1 835.3,573.6 840.7,569.3 846.1,567.0 851.5,563.9 858.7,562.9 865.9,562.5 873.1,560.3 882.0,558.0 889.2,553.5 893.7,550.3 895.0,548.7 900.4,545.4 906.7,541.8 913.0,544.2 922.0,544.5 930.9,542.4 938.1,541.8 945.3,543.6 952.5,548.1 959.7,552.1 966.9,553.9 974.1,558.0 981.3,561.6 986.6,563.8 992.9,563.4 999.2,560.7 1006.4,558.0 1013.6,555.3 1020.8,552.1 1028.0,549.0 1035.2,548.1 1042.3,548.1 1049.5,547.2 1054.9,544.2 1060.3,540.9 1064.8,541.8 1070.2,547.2 1076.5,551.7 1083.7,556.2 1090.9,556.2 1098.1,555.7 1103.4,553.5 1108.8,552.6 1112.4,551.7" fill="none" stroke="#008000" stroke-width="2.1" stroke-linejoin="round" stroke-linecap="round" />
<polyline points="672.7,513.1 676.3,518.5 679.9,523.9 684.4,525.1 689.8,526.2 693.4,530.2 697.0,537.3 700.5,540.9 704.1,543.6 706.8,540.9 710.4,533.8 717.6,533.2 721.2,539.1 723.9,544.5 728.4,547.2 732.9,559.8 735.6,557.1 738.6,543.6 741.9,547.2 746.4,547.8 751.8,545.4 755.4,552.6 758.9,562.5 762.5,567.0 767.0,571.8 769.7,571.5 773.3,566.1 776.9,569.7 780.5,574.2 784.1,574.7 787.7,572.9 790.4,576.9 794.0,582.3 796.7,591.3 798.5,602.0 800.3,611.0 803.9,612.8 808.4,613.2 812.0,612.5 814.7,607.4 817.3,596.6 820.0,580.5 822.7,573.3 826.3,569.7 831.7,569.3 835.3,567.0 838.0,558.9 840.7,544.5 843.4,540.9 847.0,543.6 849.7,539.1 852.4,537.0 856.0,543.6 860.5,544.9 865.0,548.1 869.5,543.6 874.0,543.6 878.4,540.9 882.9,541.8 885.6,533.8 888.3,525.1 892.8,525.7 895.0,523.9 898.6,519.4 902.2,516.7 905.8,517.2 908.5,523.0 910.8,533.8 913.0,542.7 916.6,544.2 921.1,542.7 924.6,538.2 928.2,533.4 932.7,532.0 936.0,532.3 939.0,540.0 942.6,545.4 946.2,553.5 949.8,562.9 953.4,565.2 957.0,570.6 959.7,575.6 963.3,576.0 966.9,570.6 969.6,567.9 972.3,569.7 974.1,578.7 977.7,584.1 983.1,585.0 987.5,583.2 991.1,579.6 993.8,573.3 995.6,564.3 998.3,557.1 1002.8,552.6 1006.4,546.3 1010.0,541.8 1014.5,539.1 1018.1,534.6 1021.7,529.8 1025.3,530.2 1028.9,528.0 1031.6,528.4 1034.3,534.6 1037.0,539.5 1040.6,539.1 1045.0,537.3 1049.5,536.4 1053.1,535.5 1055.8,524.8 1058.5,520.3 1061.2,519.9 1063.9,523.9 1066.1,533.8 1067.9,549.9 1070.2,565.2 1072.9,568.3 1076.5,570.6 1080.1,576.9 1082.8,580.5 1086.4,580.5 1089.1,575.1 1091.8,567.0 1095.4,561.6 1099.9,556.2 1103.4,551.7 1107.0,548.1 1109.7,549.0 1112.4,546.0" fill="none" stroke="#ff0000" stroke-width="2.1" stroke-linejoin="round" stroke-linecap="round" />
</g>
<clipPath id="cr2"><rect x="672" y="622" width="555" height="85"/></clipPath><g clip-path="url(#cr2)">
<polyline points="671.9,641.9 675.0,647.5 678.8,654.4 681.9,648.1 683.8,650.6 686.9,644.4 688.8,652.5 690.6,639.4 691.9,658.1 694.4,651.2 696.9,660.0 699.4,662.5 702.5,657.5 704.4,675.0 706.2,638.8 708.8,643.1 712.5,641.9 715.0,638.8 718.1,650.0 721.2,655.0 725.0,657.5 728.1,657.5 729.8,670.0 730.6,666.9 732.5,656.2 735.0,651.2 738.1,648.1 740.6,661.2 742.5,653.8 745.0,657.5 747.5,655.6 750.0,655.6 751.9,661.2 753.8,670.0 755.6,678.8 757.5,681.2 759.4,683.8 761.9,688.1 763.8,695.0 764.6,702.5 766.2,692.5 768.8,688.1 771.2,688.1 773.8,692.5 775.6,700.0 776.9,704.4 778.1,695.0 780.0,701.2 781.9,703.1 785.0,700.6 788.1,704.4 790.6,701.2 792.5,690.0 793.8,696.2 795.0,702.5 798.8,704.4 802.5,705.0 806.2,701.2 808.1,703.8 811.9,703.1 813.8,695.0 816.9,690.6 820.0,688.1 822.5,691.2 825.0,688.1 828.8,694.4 833.8,693.8 837.5,685.0 840.2,682.5 843.8,689.4 846.2,688.1 848.4,680.0 850.6,689.4 854.4,693.8 857.8,691.2 861.2,699.4 863.8,693.1 866.2,685.6 868.8,689.4 871.9,692.5 874.4,682.5 876.9,686.9 880.0,687.5 882.8,688.1 883.8,665.6 886.2,667.5 888.5,673.8 891.2,665.0 894.4,660.6 896.9,660.0 899.4,653.8 901.2,648.8 902.5,651.2 904.0,635.0 906.0,631.9 907.2,645.0 908.5,660.0 910.0,670.0 911.9,663.1 914.4,668.1 916.9,668.1 919.4,661.2 921.2,662.5 922.9,665.0 924.4,646.9 926.0,657.5 928.8,650.0 930.6,645.6 932.5,641.2 934.4,652.5 936.2,659.4 938.8,660.6 941.2,663.1 943.1,670.0 945.0,685.0 946.9,693.8 949.4,698.8 951.9,695.6 953.8,700.0 955.6,702.5 958.1,699.4 960.0,702.8 963.1,700.2 966.2,700.9 968.1,691.5 969.4,697.8 970.6,704.0 975.0,705.2 986.2,705.0 988.8,702.5 991.2,700.0 993.1,691.2 995.0,688.1 998.8,687.5 1001.2,689.4 1003.1,685.0 1004.6,680.0 1006.2,686.9 1010.0,685.0 1013.8,683.1 1016.9,678.8 1020.0,676.2 1022.5,681.2 1025.6,677.5 1028.5,670.0 1030.6,680.0 1033.1,685.0 1036.2,688.1 1038.8,688.1 1041.2,684.4 1043.1,683.8 1045.0,676.9 1046.9,675.6 1048.8,682.5 1050.6,675.0 1051.9,663.8 1053.5,647.5 1055.6,639.4 1058.1,635.6 1060.6,633.1 1062.2,633.1 1063.1,657.5 1064.4,676.2 1065.6,690.0 1067.5,700.0 1069.4,701.9 1071.2,696.2 1072.5,701.2 1073.8,696.2 1075.0,701.2 1076.2,696.9 1078.1,703.8 1080.6,701.2 1082.5,705.0 1085.0,703.1 1086.9,700.0 1088.8,689.4 1090.6,683.1 1092.5,690.0 1095.0,686.2 1096.6,683.1 1098.1,688.8 1100.0,688.1 1101.0,683.8 1101.9,672.5" fill="none" stroke="#1e90ff" stroke-width="1.1" stroke-linejoin="round" stroke-linecap="round" stroke-linejoin="miter"/>
<polyline points="671.9,658.1 675.0,662.5 678.1,667.5 680.6,664.4 682.5,665.6 686.2,660.6 688.8,664.4 690.0,661.2 692.5,668.1 693.1,671.2 695.0,669.4 698.1,675.6 700.6,672.5 702.5,669.4 704.4,683.8 706.2,655.0 708.1,653.8 710.0,656.2 712.5,653.8 715.0,644.4 717.5,653.8 721.2,658.8 725.0,660.0 728.1,663.1 730.0,695.0 731.9,660.0 733.8,655.0 736.2,650.0 738.1,649.4 740.6,661.2 742.5,653.8 745.0,657.5 747.5,655.6 750.0,655.6 751.9,661.2 753.8,670.0 755.6,678.8 757.5,681.2 759.4,683.8 761.9,688.1 763.8,695.0 764.6,702.5 766.2,692.5 768.8,688.1 771.2,688.1 773.8,692.5 775.6,700.0 776.9,704.4 778.1,695.0 780.0,701.2 781.9,703.1 785.0,700.6 788.1,704.4 790.6,701.2 792.5,690.0 793.8,696.2 795.0,702.5 798.8,704.4 802.5,705.0 806.2,701.2 808.1,703.8 811.9,703.1 814.4,696.2 817.5,691.9 820.0,689.4 822.5,691.9 825.0,686.2 827.5,695.6 831.2,695.0 834.4,694.4 837.5,687.5 840.0,685.0 843.1,690.6 846.2,689.4 848.4,682.5 850.6,690.6 854.4,695.6 858.1,691.9 861.9,700.6 864.4,695.6 866.9,691.9 870.0,693.8 872.5,696.2 875.0,691.2 878.8,691.9 882.8,691.9 883.8,675.6 886.2,680.0 888.5,684.4 891.2,680.6 894.4,678.1 896.9,677.5 900.4,669.4 902.5,673.1 905.0,672.5 906.9,671.9 908.8,679.4 910.6,686.2 913.1,682.5 915.6,685.6 918.1,680.6 920.6,678.1 922.9,677.5 924.4,671.2 926.2,675.0 928.8,669.4 931.0,666.2 932.5,662.5 935.0,668.1 937.5,670.6 940.6,672.5 943.1,675.6 945.0,682.5 946.2,688.1 949.4,688.1 952.5,686.2 954.4,695.0 956.2,701.2 958.1,698.8 960.0,702.5 963.1,700.0 966.2,700.6 968.1,691.2 969.4,697.5 970.6,703.8 975.0,705.0 980.0,705.0 981.9,701.9 983.8,705.0 987.5,703.8 989.4,701.2 991.2,702.5 993.1,692.5 995.0,688.1 998.8,687.5 1001.2,689.4 1003.1,685.0 1004.6,679.4 1006.2,687.5 1010.0,685.6 1013.8,683.8 1016.9,680.0 1020.0,678.1 1022.5,682.5 1025.6,678.8 1028.5,672.5 1030.6,681.2 1033.1,685.6 1036.2,688.5 1038.8,688.5 1041.2,685.0 1043.8,684.4 1045.6,681.2 1047.5,682.5 1048.8,685.6 1050.6,680.0 1052.2,672.5 1053.8,663.8 1056.2,666.2 1059.4,665.6 1061.9,664.4 1063.1,671.2 1064.4,685.0 1065.6,695.0 1067.5,701.2 1070.0,703.1 1072.5,700.0 1075.0,703.1 1077.5,701.9 1080.0,705.0 1083.8,703.8 1086.9,701.2 1088.8,692.5 1090.6,691.2 1092.5,694.4 1095.0,691.9 1098.1,690.0 1100.0,688.1 1101.2,675.0 1102.5,668.1 1104.4,680.0 1106.2,683.1 1108.1,678.1 1110.0,677.5 1111.9,677.5" fill="none" stroke="#9400d3" stroke-width="1.1" stroke-linejoin="round" stroke-linecap="round" />
<polyline points="671.9,638.8 673.8,643.1 676.2,646.9 678.8,651.9 681.2,646.9 683.1,648.1 685.6,645.0 687.5,646.9 688.8,660.0 690.6,643.8 692.5,673.8 694.4,666.9 696.2,678.8 698.1,699.4 700.0,693.8 701.9,688.8 704.4,706.2 706.2,650.0 707.5,648.8 709.4,653.1 711.9,646.9 714.4,639.4 716.9,651.2 718.8,661.2 721.2,670.0 723.1,672.5 725.6,674.4 728.1,678.8 729.8,688.8 731.2,665.0 732.5,656.2 735.0,650.0 737.5,646.9 739.4,651.2 740.6,658.8 742.5,651.9 744.4,656.2 746.9,653.8 749.4,653.1 751.2,657.5 753.1,667.5 755.0,676.2 756.9,681.2 758.8,679.4 761.2,683.1 763.1,690.0 764.4,697.5 766.2,688.8 768.8,684.4 771.2,684.4 773.8,688.1 775.6,695.0 776.9,702.5 778.1,691.2 779.4,696.2 781.2,701.9 783.8,698.8 786.2,696.2 788.1,702.5 790.0,700.0 792.5,683.1 793.8,695.0 795.0,701.2 797.5,703.8 800.6,701.9 802.5,704.4 806.2,699.4 807.5,702.5 811.2,702.5 813.8,693.8 815.6,688.1 818.1,683.8 820.0,676.9 821.9,681.2 824.4,669.4 825.0,673.8 826.9,687.5 830.0,686.2 834.4,683.8 836.2,645.0 838.1,633.8 840.2,633.1 842.5,647.5 844.4,655.6 846.9,645.0 848.4,638.8 850.0,651.2 851.9,665.0 854.4,682.5 856.2,676.9 858.1,672.5 860.0,690.0 861.9,700.0 863.8,685.0 866.2,671.2 868.1,676.9 870.0,683.8 872.2,692.5 874.4,668.1 876.2,676.2 878.8,677.5 880.6,678.8 882.5,681.2 883.5,642.5 884.4,628.1 886.2,637.5 888.5,653.8 890.6,644.4 892.5,640.0 894.0,633.8 896.2,643.8 898.1,632.5 900.4,624.4 902.5,631.9 904.4,636.2 905.6,633.8 906.9,645.0 908.1,661.2 909.4,677.5 910.6,685.0 912.5,676.9 914.4,682.5 916.2,689.4 918.1,682.5 920.0,678.8 921.9,676.9 923.1,668.8 924.4,653.8 926.0,668.8 927.5,661.2 930.0,652.5 932.2,646.2 934.4,657.5 936.2,668.8 938.8,671.2 941.2,673.8 943.1,680.0 944.4,690.0 945.6,697.5 948.1,705.6 950.6,702.5 952.5,700.0 954.4,706.2 957.5,705.6 962.5,705.0 966.2,700.0 968.1,688.1 969.4,693.8 970.6,705.0 973.8,704.4 975.0,705.0 978.1,702.5 980.6,705.0 982.5,701.2 984.4,705.0 986.9,703.8 988.1,698.8 990.6,695.0 992.5,683.8 994.4,671.2 996.9,668.8 998.8,667.5 1000.6,671.2 1002.8,665.0 1004.4,649.4 1006.2,666.2 1008.1,665.6 1010.0,661.2 1012.5,648.1 1015.0,643.8 1016.9,636.2 1018.8,634.4 1020.6,636.2 1022.5,645.0 1025.0,640.6 1026.9,635.0 1028.5,629.4 1030.0,640.0 1031.9,655.0 1033.8,667.5 1035.6,675.0 1037.5,678.1 1039.4,671.2 1041.2,668.1 1043.8,662.5 1045.0,665.0 1046.9,675.0 1048.8,685.0 1050.0,673.8 1051.2,653.8 1052.8,638.8 1054.4,628.1 1056.2,635.6 1057.5,638.8 1060.0,636.9 1061.6,637.5 1062.5,652.5 1063.2,670.0 1064.4,682.5 1065.6,697.5 1066.9,705.0 1070.0,702.5 1072.5,704.4 1075.0,701.9 1077.5,705.0 1081.2,703.8 1084.4,705.0 1086.9,702.5 1088.1,693.8 1090.0,691.2 1092.5,692.5 1095.0,691.2 1098.1,689.4 1100.0,686.2 1101.2,678.8 1102.5,672.5 1104.4,677.5 1105.6,663.8 1107.5,653.8 1109.4,646.9 1111.9,646.2" fill="none" stroke="#ff0000" stroke-width="1.1" stroke-linejoin="round" stroke-linecap="round" />
<polyline points="671.9,687.5 677.5,688.8 682.5,688.1 687.5,687.5 690.6,688.1 692.5,690.0 696.9,691.2 699.4,692.5 701.9,691.2 703.8,696.2 705.6,686.2 710.0,686.9 713.8,685.6 717.5,687.5 721.2,690.0 725.0,691.9 728.8,691.2 730.0,702.5 731.5,691.2 733.8,688.8 737.5,687.5 741.2,688.8 745.0,688.5 750.0,688.5 752.5,691.9 755.0,696.2 758.8,698.8 762.5,700.6 764.4,705.6 767.5,700.6 771.2,700.6 775.0,703.1 776.2,705.6 778.8,703.1 782.5,704.4 786.2,703.8 788.8,706.2 791.9,700.0 795.0,705.6 800.0,705.6 805.0,705.0 808.8,704.8 812.5,703.8 815.0,700.6 818.8,697.5 821.9,696.9 824.4,695.0 825.0,697.5 828.8,699.4 833.8,699.4 836.9,695.0 840.0,693.8 843.1,696.9 846.2,696.2 848.1,693.1 850.6,696.2 853.8,698.8 857.5,698.1 860.0,700.6 861.9,702.5 864.4,698.8 866.2,698.1 868.8,700.0 871.2,698.8 873.1,700.0 875.0,698.1 878.8,698.1 882.5,698.1 883.8,690.0 886.2,691.2 888.8,693.8 891.9,691.2 896.2,690.6 899.4,688.1 902.5,688.1 906.2,688.5 908.1,693.8 910.6,696.2 914.4,696.9 918.1,696.5 921.9,695.0 925.0,691.9 928.8,691.9 932.5,691.2 935.6,693.8 938.8,694.4 942.5,695.6 945.0,698.8 948.1,701.9 952.5,701.9 955.6,705.0 961.2,705.2 967.5,704.4 970.0,705.6 975.0,706.0 987.5,706.0 991.2,704.4 994.4,700.0 1000.0,699.4 1003.8,698.8 1004.8,696.9 1006.2,700.0 1011.2,698.8 1017.5,696.9 1023.8,696.9 1026.9,695.6 1028.8,694.4 1030.6,697.5 1035.0,699.4 1040.0,699.4 1043.8,698.1 1046.2,696.2 1048.8,697.5 1051.2,693.8 1054.0,688.1 1057.5,689.0 1062.5,689.0 1063.8,695.0 1065.6,701.2 1068.1,704.4 1075.0,705.0 1081.2,706.0 1086.2,705.6 1088.1,701.2 1090.6,700.0 1095.0,700.6 1098.8,700.0 1100.6,698.8 1101.9,695.0 1104.4,698.1 1107.5,698.8 1110.0,696.9 1112.5,696.9" fill="none" stroke="#000" stroke-width="2.3" stroke-linejoin="round" stroke-linecap="round" />
</g>
<defs><filter id="sh" x="-20%" y="-20%" width="150%" height="150%"><feGaussianBlur in="SourceAlpha" stdDeviation="2"/><feOffset dx="3" dy="3"/><feComponentTransfer><feFuncA type="linear" slope="0.45"/></feComponentTransfer><feMerge><feMergeNode/><feMergeNode in="SourceGraphic"/></feMerge></filter></defs>
<g filter="url(#sh)">
<circle cx="1111.5" cy="544.5" r="18" fill="none" stroke="#1e8a1e" stroke-width="2"/>
<line x1="990.0" y1="446.0" x2="1053.4" y2="374.1" stroke="#c00000" stroke-width="4"/>
<polygon points="1061.5,365.0 1057.6,380.5 1046.6,370.8" fill="#c00000"/>
<line x1="1065.0" y1="374.0" x2="1081.3" y2="470.0" stroke="#c00000" stroke-width="4"/>
<polygon points="1083.3,482.0 1073.7,469.2 1088.1,466.8" fill="#c00000"/>
<line x1="1083.7" y1="487.0" x2="1146.3" y2="386.4" stroke="#c00000" stroke-width="4"/>
<polygon points="1152.7,376.0 1151.4,391.9 1139.0,384.2" fill="#c00000"/>
</g></svg>
</body></html>
